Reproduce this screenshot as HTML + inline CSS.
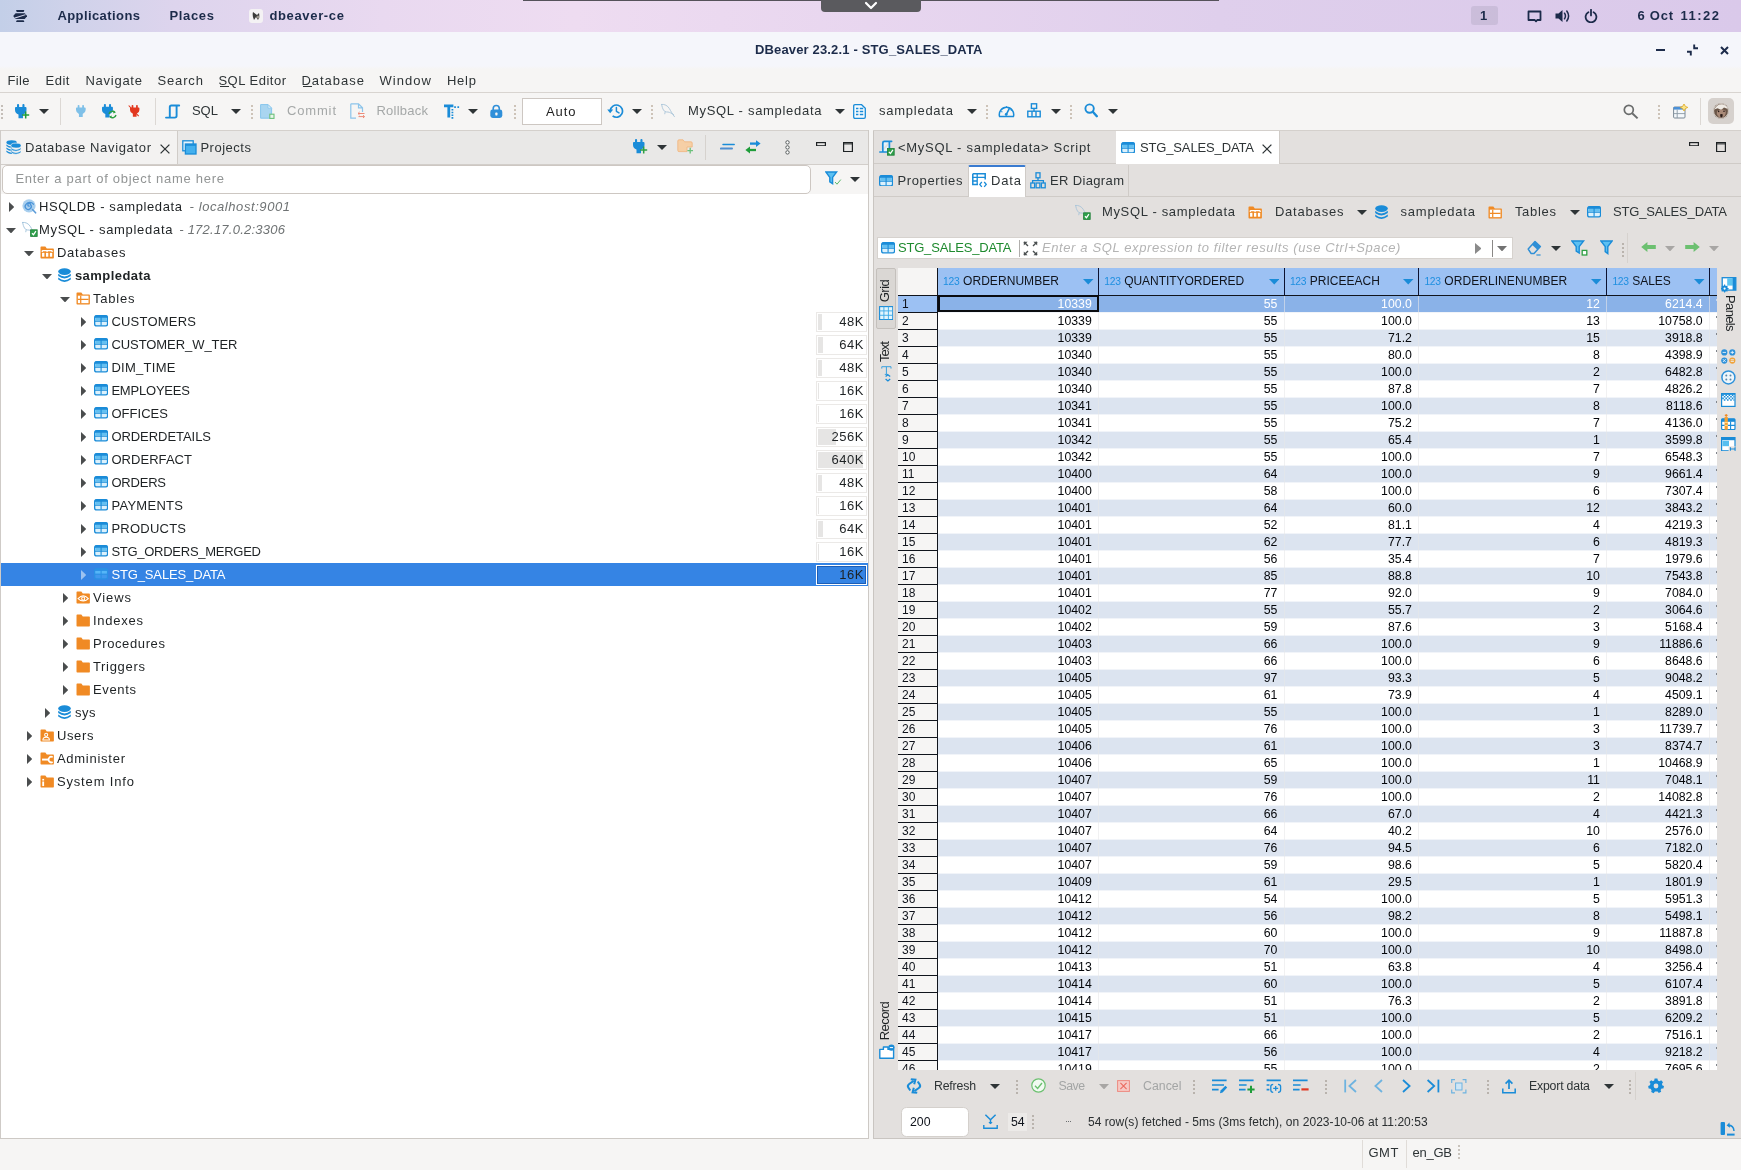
<!DOCTYPE html>
<html><head><meta charset="utf-8"><title>DBeaver</title>
<style>
html,body{margin:0;padding:0;}
body{width:1741px;height:1170px;overflow:hidden;background:#f6f5f4;font-family:"Liberation Sans",sans-serif;position:relative;}
.r{position:absolute;display:block;box-sizing:border-box;}
.t{position:absolute;white-space:pre;box-sizing:border-box;}
</style></head><body><div id="w" style="position:absolute;left:0;top:0;width:1741px;height:1170px;will-change:transform;">
<div class="r" style="left:0px;top:0px;width:1741px;height:32px;background:linear-gradient(90deg,#c3cfe8 0,#cfd2ea 4%,#ddd4ed 10%,#e9d9f0 22%,#eedcf1 33%,#e8d6ef 50%,#dfcfec 70%,#dac9ea 100%);"></div>
<div class="r" style="left:523px;top:0px;width:696px;height:1px;background:#55525a;"></div>
<div class="r" style="left:821px;top:0px;width:100px;height:12px;background:#5a5a5e;border-radius:0 0 4px 4px;"></div>
<svg class="r" style="left:864px;top:1px" width="14" height="9" viewBox="0 0 14 9" preserveAspectRatio="none"><path d="M2 2L7 7L12 2" fill="none" stroke="#fff" stroke-width="2.2" stroke-linecap="round" stroke-linejoin="round"/></svg>
<svg class="r" style="left:13px;top:10px" width="14.4" height="12.2" viewBox="0 0 14.4 12.2" preserveAspectRatio="none"><path d="M3.6 0H10.8Q11.6 0 11.2 0.8L10.6 2H3.8L3.2 0.8Q2.8 0 3.6 0Z" fill="#1c2b4a"/><path d="M3.6 12.2H10.8Q11.6 12.2 11.2 11.4L10.6 10.2H3.8L3.2 11.4Q2.8 12.2 3.6 12.2Z" fill="#1c2b4a"/><path d="M2.6 3.2H11.8L14.2 6.1L11.8 9H2.6L0.2 6.1Z" fill="#1c2b4a"/><path d="M1.6 7.6L12.2 4.2L12.9 5L2.4 8.5Z" fill="#d3d6ec"/></svg>
<div class="t" style="left:57.4px;top:6px;height:20px;line-height:20px;font-size:13px;color:#1c2b4a;font-weight:bold;letter-spacing:0.418px;">Applications</div>
<div class="t" style="left:169.4px;top:6px;height:20px;line-height:20px;font-size:13px;color:#1c2b4a;font-weight:bold;letter-spacing:0.676px;">Places</div>
<div class="r" style="left:249px;top:9px;width:14px;height:14px;background:#f4f2f4;border-radius:3px;"></div>
<svg class="r" style="left:250px;top:10px" width="12" height="12" viewBox="0 0 12 12" preserveAspectRatio="none"><path d="M3 2Q2 6 4 10L6 7L8 10Q10 7 9 3L7 5Z" fill="#3a3a3a"/><circle cx="8" cy="7" r="1.6" fill="#9a948c"/></svg>
<div class="t" style="left:269.4px;top:6px;height:20px;line-height:20px;font-size:13px;color:#1c2b4a;font-weight:bold;letter-spacing:0.659px;">dbeaver-ce</div>
<div class="r" style="left:1470.5px;top:5.5px;width:27px;height:19.5px;background:rgba(110,110,130,0.16);border-radius:3px;"></div>
<div class="t" style="left:1479.9px;top:6px;height:20px;line-height:20px;font-size:13px;color:#1c2b4a;font-weight:bold;">1</div>
<svg class="r" style="left:1527px;top:10px" width="15" height="13" viewBox="0 0 15 13" preserveAspectRatio="none"><path d="M1.5 1.5H13.5V10H10.2L9 11.4L7.8 10H1.5Z" fill="none" stroke="#1c2b4a" stroke-width="1.8" stroke-linejoin="round"/></svg>
<svg class="r" style="left:1555px;top:9px" width="16" height="14" viewBox="0 0 16 14" preserveAspectRatio="none"><path d="M0.5 4.5H3.5L7.5 1V13L3.5 9.5H0.5Z" fill="#1c2b4a"/><path d="M9.5 4.2Q11.4 7 9.5 9.8M11.8 2Q15.4 7 11.8 12" fill="none" stroke="#1c2b4a" stroke-width="1.5" stroke-linecap="round"/></svg>
<svg class="r" style="left:1584px;top:9px" width="14" height="14" viewBox="0 0 14 14" preserveAspectRatio="none"><path d="M4.4 3.2A5.4 5.4 0 1 0 9.6 3.2" fill="none" stroke="#1c2b4a" stroke-width="1.8" stroke-linecap="round"/><path d="M7 0.8V6.4" stroke="#1c2b4a" stroke-width="1.8" stroke-linecap="round"/></svg>
<div class="t" style="left:1637.4px;top:6px;height:20px;line-height:20px;font-size:13px;color:#1c2b4a;font-weight:bold;letter-spacing:0.771px;">6 Oct</div>
<div class="t" style="left:1680.4px;top:6px;height:20px;line-height:20px;font-size:13px;color:#1c2b4a;font-weight:bold;letter-spacing:1.513px;">11:22</div>
<div class="r" style="left:0px;top:32px;width:1741px;height:36.5px;background:linear-gradient(180deg,#f5f6fb 0,#f5f6fb 92%,#f6f5f4 100%);"></div>
<div class="t" style="left:754.9px;top:39.5px;height:20px;line-height:20px;font-size:13px;color:#1c2b4a;font-weight:bold;letter-spacing:0.160px;">DBeaver 23.2.1 - STG_SALES_DATA</div>
<div class="r" style="left:1656px;top:49px;width:9px;height:2px;background:#1c2b4a;"></div>
<svg class="r" style="left:1686px;top:44px" width="13" height="12" viewBox="0 0 13 12" preserveAspectRatio="none"><path d="M8.2 0.6V4.2H12M4.8 11.4V7.8H1" fill="none" stroke="#1c2b4a" stroke-width="1.9"/></svg>
<svg class="r" style="left:1720px;top:45.5px" width="9" height="9" viewBox="0 0 9 9" preserveAspectRatio="none"><path d="M1 1L8 8M8 1L1 8" stroke="#1c2b4a" stroke-width="2" /></svg>
<div class="r" style="left:0px;top:68.5px;width:1741px;height:24.5px;background:#f6f5f4;"></div>
<div class="t" style="left:7.4px;top:70.5px;height:20px;line-height:20px;font-size:13px;color:#2e3436;letter-spacing:0.382px;">File</div>
<div class="t" style="left:45.4px;top:70.5px;height:20px;line-height:20px;font-size:13px;color:#2e3436;letter-spacing:0.565px;">Edit</div>
<div class="t" style="left:85.4px;top:70.5px;height:20px;line-height:20px;font-size:13px;color:#2e3436;letter-spacing:0.753px;">Navigate</div>
<div class="t" style="left:157.4px;top:70.5px;height:20px;line-height:20px;font-size:13px;color:#2e3436;letter-spacing:0.879px;">Search</div>
<div class="t" style="left:218.4px;top:70.5px;height:20px;line-height:20px;font-size:13px;color:#2e3436;letter-spacing:0.499px;">SQL Editor</div>
<div class="t" style="left:301.4px;top:70.5px;height:20px;line-height:20px;font-size:13px;color:#2e3436;letter-spacing:0.990px;">Database</div>
<div class="t" style="left:379.4px;top:70.5px;height:20px;line-height:20px;font-size:13px;color:#2e3436;letter-spacing:1.070px;">Window</div>
<div class="t" style="left:446.9px;top:70.5px;height:20px;line-height:20px;font-size:13px;color:#2e3436;letter-spacing:0.783px;">Help</div>
<div class="r" style="left:219.5px;top:85.8px;width:9px;height:1px;background:#2e3436;"></div>
<div class="r" style="left:302.5px;top:85.8px;width:9.5px;height:1px;background:#2e3436;"></div>
<div class="r" style="left:0px;top:92px;width:1741px;height:1px;background:#d8d4d0;"></div>
<div class="r" style="left:0px;top:93.5px;width:1741px;height:37px;background:#f6f5f4;"></div>
<div class="r" style="left:1.3px;top:104.5px;width:2px;height:2px;background:#c4beb8;"></div>
<div class="r" style="left:1.3px;top:108.5px;width:2px;height:2px;background:#c4beb8;"></div>
<div class="r" style="left:1.3px;top:112.5px;width:2px;height:2px;background:#c4beb8;"></div>
<div class="r" style="left:1.3px;top:116.5px;width:2px;height:2px;background:#c4beb8;"></div>
<svg class="r" style="left:14.7px;top:103.7px;overflow:visible" width="16" height="16" viewBox="0 0 16 16"><rect x="2" y="0" width="2.1" height="4.4" rx="0.9" fill="#1a8cd8"/><rect x="7.4" y="0" width="2.1" height="4.4" rx="0.9" fill="#1a8cd8"/><path d="M0.9 3H10.6Q11.5 3 11.5 3.9V6Q11.5 9.2 8 10.6V14.2H3.5V10.6Q0 9.2 0 6V3.9Q0 3 0.9 3Z" fill="#1a8cd8"/><path d="M7.2 11H14.2M10.7 7.5V14.5" stroke="#1f9d3a" stroke-width="1.5"/></svg>
<svg class="r" style="left:39.1px;top:109px" width="10" height="5" viewBox="0 0 10 5" preserveAspectRatio="none"><path d="M0 0H10 L5 5Z" fill="#2e3436"/></svg>
<div class="r" style="left:60px;top:98px;width:1px;height:27px;background:#dcd8d4;"></div>
<svg class="r" style="left:76.4px;top:105px;overflow:visible" width="13.44" height="13.44" viewBox="0 0 16 16"><rect x="2" y="0" width="2.1" height="4.4" rx="0.9" fill="#7fc0e8"/><rect x="7.4" y="0" width="2.1" height="4.4" rx="0.9" fill="#7fc0e8"/><path d="M0.9 3H10.6Q11.5 3 11.5 3.9V6Q11.5 9.2 8 10.6V14.2H3.5V10.6Q0 9.2 0 6V3.9Q0 3 0.9 3Z" fill="#7fc0e8"/></svg>
<svg class="r" style="left:101.5px;top:104px;overflow:visible" width="15.2" height="15.2" viewBox="0 0 16 16"><rect x="2" y="0" width="2.1" height="4.4" rx="0.9" fill="#1a8cd8"/><rect x="7.4" y="0" width="2.1" height="4.4" rx="0.9" fill="#1a8cd8"/><path d="M0.9 3H10.6Q11.5 3 11.5 3.9V6Q11.5 9.2 8 10.6V14.2H3.5V10.6Q0 9.2 0 6V3.9Q0 3 0.9 3Z" fill="#1a8cd8"/></svg>
<svg class="r" style="left:107.6px;top:109.8px" width="9" height="9" viewBox="0 0 9 9" preserveAspectRatio="none"><path d="M1 4A3.5 3.5 0 0 1 7 2.4M8 5A3.5 3.5 0 0 1 2 6.6" fill="none" stroke="#2ea043" stroke-width="1.4"/><path d="M5.6 0.6L7.8 2.6L5.2 3.6ZM3.4 8.4L1.2 6.4L3.8 5.4Z" fill="#2ea043"/></svg>
<svg class="r" style="left:130.4px;top:105px;overflow:visible" width="13.12" height="13.12" viewBox="0 0 16 16"><rect x="2" y="0" width="2.1" height="4.4" rx="0.9" fill="#e2381f"/><rect x="7.4" y="0" width="2.1" height="4.4" rx="0.9" fill="#e2381f"/><path d="M0.9 3H10.6Q11.5 3 11.5 3.9V6Q11.5 9.2 8 10.6V14.2H3.5V10.6Q0 9.2 0 6V3.9Q0 3 0.9 3Z" fill="#e2381f"/><path d="M-1.6 0.6L10.6 13.6" stroke="#e2381f" stroke-width="1.3"/></svg>
<div class="r" style="left:155px;top:98px;width:1px;height:27px;background:#dcd8d4;"></div>
<svg class="r" style="left:164.5px;top:103.5px" width="16" height="16" viewBox="0 0 16 16" preserveAspectRatio="none"><path d="M14.2 1.5H6.4Q4.8 1.5 4.8 3.1V13.4M11.6 1.5V11.8Q11.6 13.6 9.8 13.6H1" fill="none" stroke="#1a8cd8" stroke-width="1.9" stroke-linecap="round" stroke-linejoin="round"/></svg>
<div class="t" style="left:191.9px;top:101px;height:20px;line-height:20px;font-size:13px;color:#2e3436;letter-spacing:0.042px;">SQL</div>
<svg class="r" style="left:231px;top:108.5px" width="10" height="5" viewBox="0 0 10 5" preserveAspectRatio="none"><path d="M0 0H10 L5 5Z" fill="#2e3436"/></svg>
<div class="r" style="left:250.5px;top:104.5px;width:2px;height:2px;background:#cdc3b8;"></div>
<div class="r" style="left:250.5px;top:108.5px;width:2px;height:2px;background:#cdc3b8;"></div>
<div class="r" style="left:250.5px;top:112.5px;width:2px;height:2px;background:#cdc3b8;"></div>
<div class="r" style="left:250.5px;top:116.5px;width:2px;height:2px;background:#cdc3b8;"></div>
<svg class="r" style="left:260px;top:104px" width="15" height="16" viewBox="0 0 15 16" preserveAspectRatio="none"><path d="M0.6 0.6H8L11.6 4.2V14.2H0.6Z" fill="#a9d5f0" stroke="#86c5ec" stroke-width="1"/><path d="M8 0.6V4.2H11.6Z" fill="#e3f1fa" stroke="#86c5ec" stroke-width="0.8"/><rect x="9.8" y="10.2" width="4.2" height="4.2" fill="#e8f6ea" stroke="#6cc07a" stroke-width="1.1"/></svg>
<div class="t" style="left:286.9px;top:101px;height:20px;line-height:20px;font-size:13px;color:#a5a8a8;letter-spacing:0.864px;">Commit</div>
<svg class="r" style="left:350px;top:103px" width="15" height="16" viewBox="0 0 15 16" preserveAspectRatio="none"><path d="M0.8 0.8H8.5L12.5 4.8V9M6 15.2H0.8V0.8M8.5 0.8V4.8H12.5" fill="none" stroke="#8cc4ea" stroke-width="1.2"/><path d="M8 10.5H14.5M8 10.5L9.6 9M8 10.5L9.6 12M14.5 13.6H8.5M14.5 13.6L13 12.2M14.5 13.6L13 15" stroke="#ec8a78" stroke-width="1" fill="none"/></svg>
<div class="t" style="left:376.4px;top:101px;height:20px;line-height:20px;font-size:13px;color:#a5a8a8;letter-spacing:0.246px;">Rollback</div>
<svg class="r" style="left:444px;top:103.5px" width="16" height="16" viewBox="0 0 16 16" preserveAspectRatio="none"><path d="M0 1.8H9.4M4.8 1.8V13.6" stroke="#1a8cd8" stroke-width="2.8"/><path d="M10.2 3.2H15.4" stroke="#1a8cd8" stroke-width="1.8" stroke-dasharray="1.7 1.5"/><path d="M8.4 5V15" stroke="#1a8cd8" stroke-width="1.8" stroke-dasharray="1.6 1.1"/></svg>
<svg class="r" style="left:468px;top:108.5px" width="10" height="5" viewBox="0 0 10 5" preserveAspectRatio="none"><path d="M0 0H10 L5 5Z" fill="#2e3436"/></svg>
<svg class="r" style="left:489.5px;top:104px" width="13" height="15" viewBox="0 0 13 15" preserveAspectRatio="none"><path d="M3.2 6.4V4.6A3.05 3.05 0 0 1 9.3 4.6V6.4" fill="none" stroke="#2f8fd9" stroke-width="1.6"/><rect x="0.3" y="5.6" width="12" height="8.4" rx="2.4" fill="#2f8fd9"/><rect x="5.3" y="8.6" width="2.2" height="2.8" rx="0.6" fill="#f6f5f4"/></svg>
<div class="r" style="left:514px;top:104.5px;width:2px;height:2px;background:#cdc3b8;"></div>
<div class="r" style="left:514px;top:108.5px;width:2px;height:2px;background:#cdc3b8;"></div>
<div class="r" style="left:514px;top:112.5px;width:2px;height:2px;background:#cdc3b8;"></div>
<div class="r" style="left:514px;top:116.5px;width:2px;height:2px;background:#cdc3b8;"></div>
<div class="r" style="left:522px;top:98px;width:80px;height:27px;background:#ffffff;border:1px solid #cdc7c2;"></div>
<div class="t" style="left:545.9px;top:101.5px;height:20px;line-height:20px;font-size:13px;color:#1e1e1e;letter-spacing:0.950px;">Auto</div>
<svg class="r" style="left:607px;top:103px" width="17" height="16" viewBox="0 0 17 16" preserveAspectRatio="none"><path d="M3.3 7.6A6.1 6.1 0 1 1 5.6 12.9" fill="none" stroke="#1a8cd8" stroke-width="1.7"/><path d="M9.4 4.4V8.3L12 9.9" fill="none" stroke="#1a8cd8" stroke-width="1.5" stroke-linecap="round" stroke-linejoin="round"/><path d="M0.2 6.4H6.2L3.2 10.2Z" fill="#1a8cd8"/></svg>
<svg class="r" style="left:632px;top:108.5px" width="10" height="5" viewBox="0 0 10 5" preserveAspectRatio="none"><path d="M0 0H10 L5 5Z" fill="#2e3436"/></svg>
<div class="r" style="left:651px;top:104.5px;width:2px;height:2px;background:#cdc3b8;"></div>
<div class="r" style="left:651px;top:108.5px;width:2px;height:2px;background:#cdc3b8;"></div>
<div class="r" style="left:651px;top:112.5px;width:2px;height:2px;background:#cdc3b8;"></div>
<div class="r" style="left:651px;top:116.5px;width:2px;height:2px;background:#cdc3b8;"></div>
<svg class="r" style="left:661px;top:103px" width="16" height="16" viewBox="0 0 16 16" preserveAspectRatio="none"><path d="M0.6 1.4C3.6 1 6.6 2.6 8.4 5.6C9.8 8 11 10.6 13.4 13.6M0.6 1.4C1 3.6 1.6 5.6 2.6 7.2C3.6 8.6 5.2 9.2 7 9C8.8 9.4 10.6 10.2 12.6 11.6M4.2 8.6L3.8 10.8" fill="none" stroke="#a9c4d8" stroke-width="0.9" stroke-linecap="round"/></svg>
<div class="t" style="left:687.9px;top:101px;height:20px;line-height:20px;font-size:13px;color:#2e3436;letter-spacing:0.703px;">MySQL - sampledata</div>
<svg class="r" style="left:835px;top:108.5px" width="10" height="5" viewBox="0 0 10 5" preserveAspectRatio="none"><path d="M0 0H10 L5 5Z" fill="#2e3436"/></svg>
<svg class="r" style="left:853px;top:104px" width="13" height="15" viewBox="0 0 13 15" preserveAspectRatio="none"><path d="M0.7 2Q0.7 0.7 2 0.7H8.6L12.3 4.2V13Q12.3 14.3 11 14.3H2Q0.7 14.3 0.7 13Z" fill="#f4fafe" stroke="#1a8cd8" stroke-width="1.3"/><path d="M3 4.6H5.4M3 7.6H5.4M3 10.6H5.4" stroke="#1a8cd8" stroke-width="1.5"/><path d="M6.8 4.6H10.2M6.8 7.6H10.2M6.8 10.6H10.2" stroke="#1a8cd8" stroke-width="1.5"/></svg>
<div class="t" style="left:878.9px;top:101px;height:20px;line-height:20px;font-size:13px;color:#2e3436;letter-spacing:0.763px;">sampledata</div>
<svg class="r" style="left:967px;top:108.5px" width="10" height="5" viewBox="0 0 10 5" preserveAspectRatio="none"><path d="M0 0H10 L5 5Z" fill="#2e3436"/></svg>
<div class="r" style="left:986px;top:104.5px;width:2px;height:2px;background:#cdc3b8;"></div>
<div class="r" style="left:986px;top:108.5px;width:2px;height:2px;background:#cdc3b8;"></div>
<div class="r" style="left:986px;top:112.5px;width:2px;height:2px;background:#cdc3b8;"></div>
<div class="r" style="left:986px;top:116.5px;width:2px;height:2px;background:#cdc3b8;"></div>
<svg class="r" style="left:998px;top:103px" width="17" height="15" viewBox="0 0 17 15" preserveAspectRatio="none"><path d="M1.6 13.6A7.2 7.2 0 1 1 15.4 13.6Z" fill="none" stroke="#1a8cd8" stroke-width="1.5" stroke-linejoin="round"/><path d="M8.2 11.6L11.4 5.4" stroke="#1a8cd8" stroke-width="1.6" stroke-linecap="round"/><path d="M3.2 8.6L4.4 9M5.2 4.8L6 5.8M8.5 3.2V4.4M12.8 7.6L13.8 7.2" stroke="#1a8cd8" stroke-width="1.1"/><circle cx="8.2" cy="11.4" r="1.4" fill="#1a8cd8"/></svg>
<svg class="r" style="left:1027px;top:103px" width="14" height="15" viewBox="0 0 14 15" preserveAspectRatio="none"><rect x="4.4" y="0.8" width="5.2" height="4.6" fill="none" stroke="#1a8cd8" stroke-width="1.4"/><path d="M7 5.4V8" stroke="#1a8cd8" stroke-width="1.4"/><rect x="0.8" y="8.2" width="12.4" height="5.6" fill="none" stroke="#1a8cd8" stroke-width="1.4"/><path d="M5 8.2V13.8M9 8.2V13.8" stroke="#1a8cd8" stroke-width="1.4"/></svg>
<svg class="r" style="left:1051px;top:108.5px" width="10" height="5" viewBox="0 0 10 5" preserveAspectRatio="none"><path d="M0 0H10 L5 5Z" fill="#2e3436"/></svg>
<div class="r" style="left:1070px;top:104.5px;width:2px;height:2px;background:#cdc3b8;"></div>
<div class="r" style="left:1070px;top:108.5px;width:2px;height:2px;background:#cdc3b8;"></div>
<div class="r" style="left:1070px;top:112.5px;width:2px;height:2px;background:#cdc3b8;"></div>
<div class="r" style="left:1070px;top:116.5px;width:2px;height:2px;background:#cdc3b8;"></div>
<svg class="r" style="left:1084px;top:103px" width="14" height="15" viewBox="0 0 14 15" preserveAspectRatio="none"><circle cx="5.6" cy="5.6" r="4.2" fill="none" stroke="#1a8cd8" stroke-width="1.9"/><path d="M8.8 8.8L12.8 13.2" stroke="#1a8cd8" stroke-width="2.4" stroke-linecap="round"/></svg>
<svg class="r" style="left:1108px;top:108.5px" width="10" height="5" viewBox="0 0 10 5" preserveAspectRatio="none"><path d="M0 0H10 L5 5Z" fill="#2e3436"/></svg>
<svg class="r" style="left:1622.5px;top:103.5px" width="16" height="16" viewBox="0 0 16 16" preserveAspectRatio="none"><circle cx="5.8" cy="5.8" r="4.5" fill="none" stroke="#6a6c6c" stroke-width="1.7"/><path d="M9.2 9.2L14.6 14.4" stroke="#6a6c6c" stroke-width="2"/></svg>
<div class="r" style="left:1658px;top:104.5px;width:2px;height:2px;background:#cdc3b8;"></div>
<div class="r" style="left:1658px;top:108.5px;width:2px;height:2px;background:#cdc3b8;"></div>
<div class="r" style="left:1658px;top:112.5px;width:2px;height:2px;background:#cdc3b8;"></div>
<div class="r" style="left:1658px;top:116.5px;width:2px;height:2px;background:#cdc3b8;"></div>
<svg class="r" style="left:1672.5px;top:103.5px" width="15" height="15" viewBox="0 0 15 15" preserveAspectRatio="none"><rect x="0.6" y="3" width="11.4" height="11" rx="1" fill="#f4f8fb" stroke="#7a8894" stroke-width="1"/><rect x="0.6" y="3" width="11.4" height="2.6" fill="#4a90d8"/><path d="M4.2 5.6V14M0.6 9.6H12" stroke="#8a98a4" stroke-width="0.9"/><path d="M11 0L12.4 2.4L14.8 3.4L12.4 4.6L11 7L9.6 4.6L7.2 3.4L9.6 2.4Z" fill="#fbe58a" stroke="#e0a820" stroke-width="0.8"/></svg>
<div class="r" style="left:1700px;top:98px;width:1px;height:27px;background:#dcd8d4;"></div>
<div class="r" style="left:1708px;top:98px;width:26px;height:25.6px;background:#d6d1cd;border-radius:5px;"></div>
<svg class="r" style="left:1713px;top:103.2px" width="16" height="16" viewBox="0 0 16 16" preserveAspectRatio="none"><circle cx="8" cy="8" r="7.7" fill="#6a5648"/><path d="M1.2 6.4Q4 1 9 1.2Q13.4 1.6 14.8 6L11 4.6L8.2 7L4.6 5.2Z" fill="#efeae4"/><path d="M4 8Q8 5.2 12.4 7.4Q13.6 11 11 13.6Q8 15.4 5.2 13.6Q3 11 4 8Z" fill="#a98a78"/><path d="M7 11.4Q8.4 10.4 9.8 11.4Q9.6 14.4 8.4 14.6Q7.2 14.4 7 11.4Z" fill="#2a1c18"/><circle cx="5.6" cy="8.4" r="0.8" fill="#2a1c18"/><circle cx="11" cy="8.2" r="0.8" fill="#2a1c18"/><circle cx="8" cy="8" r="7.4" fill="none" stroke="#e8e2dc" stroke-width="0.8"/></svg>
<div class="r" style="left:0px;top:130.3px;width:869px;height:33.5px;background:#e9e8e7;"></div>
<div class="r" style="left:0px;top:130.3px;width:869px;height:1px;background:#d4d0cc;"></div>
<div class="r" style="left:1px;top:131.3px;width:177px;height:32.5px;background:#f3f2f1;border-right:1px solid #d0ccc8;"></div>
<svg class="r" style="left:5.5px;top:140px" width="15.5" height="15" viewBox="0 0 15.5 15" preserveAspectRatio="none"><g fill="#1a8cd8"><ellipse cx="5.6" cy="2.6" rx="5.2" ry="2.4"/><path d="M0.4 4.4Q3 6.6 6 6.4V8Q3 8.2 0.4 6ZM0.4 7.4Q3 9.6 6 9.4V11Q3 11.2 0.4 9ZM0.4 10.4Q3 12.6 6 12.4V14Q3 14.2 0.4 12Z"/></g><g fill="#1a8cd8" stroke="#f3f2f1" stroke-width="0.7"><ellipse cx="10" cy="5.6" rx="5.2" ry="2.5"/><path d="M4.8 7.6Q10 11.4 15.2 7.6V9.4Q10 13.2 4.8 9.4Z"/><path d="M4.8 10.6Q10 14.4 15.2 10.6V12.4Q10 16.2 4.8 12.4Z"/></g></svg>
<div class="t" style="left:24.9px;top:137.5px;height:20px;line-height:20px;font-size:13px;color:#2e3436;letter-spacing:0.657px;">Database Navigator</div>
<svg class="r" style="left:160px;top:143.5px" width="10" height="10" viewBox="0 0 10 10" preserveAspectRatio="none"><path d="M0.6 0.6L9.4 9.4M9.4 0.6L0.6 9.4" stroke="#2e3436" stroke-width="1.3" fill="none"/></svg>
<svg class="r" style="left:182px;top:140px" width="15" height="15" viewBox="0 0 15 15" preserveAspectRatio="none"><rect x="0.8" y="0.8" width="10.4" height="10" fill="#e6f4fc" stroke="#1a8cd8" stroke-width="1.3"/><rect x="3.4" y="4" width="10.6" height="10" fill="#43b0ee" stroke="#1a8cd8" stroke-width="1.3"/><path d="M3.4 5H14" stroke="#1a8cd8" stroke-width="1.6"/></svg>
<div class="t" style="left:200.4px;top:137.5px;height:20px;line-height:20px;font-size:13px;color:#2e3436;letter-spacing:0.519px;">Projects</div>
<svg class="r" style="left:632.5px;top:139px;overflow:visible" width="16" height="16" viewBox="0 0 16 16"><rect x="2" y="0" width="2.1" height="4.4" rx="0.9" fill="#1a8cd8"/><rect x="7.4" y="0" width="2.1" height="4.4" rx="0.9" fill="#1a8cd8"/><path d="M0.9 3H10.6Q11.5 3 11.5 3.9V6Q11.5 9.2 8 10.6V14.2H3.5V10.6Q0 9.2 0 6V3.9Q0 3 0.9 3Z" fill="#1a8cd8"/><path d="M7.2 11H14.2M10.7 7.5V14.5" stroke="#2ea043" stroke-width="1.5"/></svg>
<svg class="r" style="left:657px;top:145px" width="10" height="5" viewBox="0 0 10 5" preserveAspectRatio="none"><path d="M0 0H10 L5 5Z" fill="#2e3436"/></svg>
<svg class="r" style="left:677px;top:139px" width="17" height="15" viewBox="0 0 17 15" preserveAspectRatio="none"><path d="M0.8 2Q0.8 0.8 2 0.8H6L7.6 2.8H14Q15.2 2.8 15.2 4V8H10V12.6H2Q0.8 12.6 0.8 11.4Z" fill="#f6cfa6" stroke="#f0b47c" stroke-width="0.8"/><path d="M10.4 11.6H16M13.2 8.8V14.4" stroke="#6cc07a" stroke-width="1.3"/></svg>
<div class="r" style="left:705px;top:135px;width:1px;height:25px;background:#d6d2ce;"></div>
<svg class="r" style="left:719.5px;top:143px" width="15" height="8" viewBox="0 0 15 8" preserveAspectRatio="none"><path d="M3 1.4H14.2" stroke="#1a8cd8" stroke-width="1.5" stroke-linecap="round"/><path d="M0.8 5.6H12" stroke="#4f8ed0" stroke-width="2" stroke-linecap="round"/></svg>
<svg class="r" style="left:745px;top:140px" width="16" height="14" viewBox="0 0 16 14" preserveAspectRatio="none"><path d="M5 3.6H12.4" stroke="#1a8cd8" stroke-width="2.3"/><path d="M11 0.2L15.6 3.6L11 7Z" fill="#1a8cd8"/><path d="M11 10H3.6" stroke="#1f9d3a" stroke-width="2.3"/><path d="M5 6.6L0.4 10L5 13.4Z" fill="#1f9d3a"/></svg>
<svg class="r" style="left:784px;top:140px" width="7" height="15" viewBox="0 0 7 15" preserveAspectRatio="none"><circle cx="3.5" cy="2.4" r="1.7" fill="#fff" stroke="#4a4f50" stroke-width="0.9"/><circle cx="3.5" cy="7.4" r="1.7" fill="#fff" stroke="#4a4f50" stroke-width="0.9"/><circle cx="3.5" cy="12.4" r="1.7" fill="#fff" stroke="#4a4f50" stroke-width="0.9"/></svg>
<svg class="r" style="left:816px;top:141.8px" width="10" height="4.4" viewBox="0 0 10 4.4" preserveAspectRatio="none"><rect x="0.6" y="0.6" width="8.8" height="3.2" fill="none" stroke="#1e2224" stroke-width="1.2"/></svg>
<svg class="r" style="left:843px;top:141.8px" width="10" height="10.2" viewBox="0 0 10 10.2" preserveAspectRatio="none"><rect x="0.6" y="0.6" width="8.8" height="9" fill="none" stroke="#1e2224" stroke-width="1.2"/><path d="M0.6 1.9H9.4" stroke="#1e2224" stroke-width="1"/></svg>
<div class="r" style="left:0px;top:163.5px;width:869px;height:1px;background:#d2ceca;"></div>
<div class="r" style="left:0px;top:165px;width:869px;height:29px;background:#f6f5f4;"></div>
<div class="r" style="left:1.5px;top:165px;width:809px;height:28.5px;background:#ffffff;border:1px solid #cdc7c2;border-radius:5px;"></div>
<div class="t" style="left:15.4px;top:169px;height:20px;line-height:20px;font-size:13px;color:#929595;letter-spacing:0.713px;">Enter a part of object name here</div>
<svg class="r" style="left:825px;top:171px" width="17" height="15" viewBox="0 0 17 15" preserveAspectRatio="none"><path d="M0.8 1H11.6L7.6 6.4V12.6L4.8 10.8V6.4Z" fill="#5cc0f2" stroke="#1a8cd8" stroke-width="1.4"/><path d="M10 11L12 13.2L15.8 8.6" fill="none" stroke="#58b868" stroke-width="1"/></svg>
<svg class="r" style="left:850.2px;top:177px" width="10" height="5" viewBox="0 0 10 5" preserveAspectRatio="none"><path d="M0 0H10 L5 5Z" fill="#2e3436"/></svg>
<div class="r" style="left:0px;top:194px;width:869px;height:944px;background:#ffffff;"></div>
<div class="r" style="left:0px;top:130.3px;width:1px;height:1008px;background:#cfcbc7;"></div>
<div class="r" style="left:868px;top:130.3px;width:1px;height:1008px;background:#cdc9c5;"></div>
<div class="r" style="left:0px;top:1138px;width:869px;height:1px;background:#cdc9c5;"></div>
<svg class="r" style="left:9.1px;top:202px" width="5.4" height="10" viewBox="0 0 5.4 10" preserveAspectRatio="none"><path d="M0 0V10 L5.4 5Z" fill="#4a4d4e"/></svg>
<svg class="r" style="left:22px;top:198.5px" width="15" height="15" viewBox="0 0 15 15" preserveAspectRatio="none"><circle cx="7" cy="6.8" r="6.6" fill="#a9cfee"/><path d="M10.5 10.5L13.6 13.8" stroke="#5b9bd8" stroke-width="1.6" stroke-linecap="round"/><path d="M7.2 7.2A1.4 1.4 0 1 1 8.6 5.6A3 3 0 1 1 4.2 5.2A4.6 4.6 0 0 1 11.4 5.2" fill="none" stroke="#4a93d8" stroke-width="1.3" stroke-linecap="round"/></svg>
<div class="t" style="left:38.9px;top:197px;height:20px;line-height:20px;font-size:13px;color:#1e2224;letter-spacing:0.603px;">HSQLDB - sampledata</div>
<div class="t" style="left:185.4px;top:197px;height:20px;line-height:20px;font-size:13px;color:#6f7374;font-style:italic;letter-spacing:0.574px;"> - localhost:9001</div>
<svg class="r" style="left:6px;top:227.8px" width="10" height="5.4" viewBox="0 0 10 5.4" preserveAspectRatio="none"><path d="M0 0H10 L5 5.4Z" fill="#4a4d4e"/></svg>
<svg class="r" style="left:21.5px;top:221.4px" width="16" height="16" viewBox="0 0 16 16" preserveAspectRatio="none"><path d="M0.6 1.4C3.6 1 6.6 2.6 8.4 5.6C9.8 8 11 10.6 13.4 13.6M0.6 1.4C1 3.6 1.6 5.6 2.6 7.2C3.6 8.6 5.2 9.2 7 9C8.8 9.4 10.6 10.2 12.6 11.6M4.2 8.6L3.8 10.8" fill="none" stroke="#9fc2da" stroke-width="0.9" stroke-linecap="round"/><rect x="8.6" y="8.8" width="6.6" height="6.6" fill="#2e9f4a" stroke="#1f7f38" stroke-width="0.8"/><path d="M10 12.2L11.5 13.8L13.9 10.2" fill="none" stroke="#fff" stroke-width="1.3"/></svg>
<div class="t" style="left:38.9px;top:220px;height:20px;line-height:20px;font-size:13px;color:#1e2224;letter-spacing:0.703px;">MySQL - sampledata</div>
<div class="t" style="left:175.4px;top:220px;height:20px;line-height:20px;font-size:13px;color:#6f7374;font-style:italic;letter-spacing:0.237px;"> - 172.17.0.2:3306</div>
<svg class="r" style="left:24px;top:250.8px" width="10" height="5.4" viewBox="0 0 10 5.4" preserveAspectRatio="none"><path d="M0 0H10 L5 5.4Z" fill="#4a4d4e"/></svg>
<svg class="r" style="left:40px;top:245.6px" width="14.4" height="13" viewBox="0 0 14 12" preserveAspectRatio="none"><path d="M0.5 1.2Q0.5 0.5 1.2 0.5H5.2L6.6 2.2H12.8Q13.5 2.2 13.5 2.9V10.8Q13.5 11.5 12.8 11.5H1.2Q0.5 11.5 0.5 10.8Z" fill="#f08a24"/><path d="M2.2 4.2H11.8M2.2 4.2V5.6M6.9 4.2V5.6M11.8 4.2V5.6" stroke="#fff" stroke-width="1.2" fill="none"/><rect x="2" y="6.3" width="2.3" height="3.6" fill="#fff"/><rect x="5.8" y="6.3" width="2.3" height="3.6" fill="#fff"/><rect x="9.6" y="6.3" width="2.3" height="3.6" fill="#fff"/></svg>
<div class="t" style="left:56.9px;top:243px;height:20px;line-height:20px;font-size:13px;color:#1e2224;letter-spacing:0.804px;">Databases</div>
<svg class="r" style="left:42px;top:273.8px" width="10" height="5.4" viewBox="0 0 10 5.4" preserveAspectRatio="none"><path d="M0 0H10 L5 5.4Z" fill="#4a4d4e"/></svg>
<svg class="r" style="left:58.4px;top:267.8px" width="13" height="14.8" viewBox="0 0 13 13.7" preserveAspectRatio="none"><ellipse cx="6.5" cy="3.3" rx="6.3" ry="3.1" fill="#1a8cd8"/><path d="M0.2 5.4Q6.5 10.2 12.8 5.4V7.4Q6.5 12 0.2 7.4Z" fill="#1a8cd8"/><path d="M0.2 8.9Q6.5 13.6 12.8 8.9V10.6Q6.5 15.2 0.2 10.6Z" fill="#1a8cd8"/></svg>
<div class="t" style="left:74.9px;top:266px;height:20px;line-height:20px;font-size:13px;color:#1e2224;font-weight:bold;letter-spacing:0.450px;">sampledata</div>
<svg class="r" style="left:60px;top:296.8px" width="10" height="5.4" viewBox="0 0 10 5.4" preserveAspectRatio="none"><path d="M0 0H10 L5 5.4Z" fill="#4a4d4e"/></svg>
<svg class="r" style="left:76px;top:291.6px" width="14.4" height="13" viewBox="0 0 14 12" preserveAspectRatio="none"><path d="M0.5 1.2Q0.5 0.5 1.2 0.5H5.2L6.6 2.2H12.8Q13.5 2.2 13.5 2.9V10.8Q13.5 11.5 12.8 11.5H1.2Q0.5 11.5 0.5 10.8Z" fill="#f08a24"/><rect x="1.8" y="3.4" width="10.4" height="6.9" fill="#fff"/><path d="M1.8 6.85H12.2M4.6 3.4V10.3" stroke="#f08a24" stroke-width="1.2"/></svg>
<div class="t" style="left:92.9px;top:289px;height:20px;line-height:20px;font-size:13px;color:#1e2224;letter-spacing:0.801px;">Tables</div>
<svg class="r" style="left:81.1px;top:317px" width="5.4" height="10" viewBox="0 0 5.4 10" preserveAspectRatio="none"><path d="M0 0V10 L5.4 5Z" fill="#4a4d4e"/></svg>
<svg class="r" style="left:94px;top:315px" width="14.2" height="11.6" viewBox="0 0 14.2 11.6" preserveAspectRatio="none"><rect x="0.65" y="0.65" width="12.9" height="10.3" rx="2" fill="#dcf1fc" stroke="#1a8cd8" stroke-width="1.3"/><path d="M1.3 2.6H12.9V5.7H1.3Z" fill="#62c0f2"/><path d="M1 1.7H13.2" stroke="#1a8cd8" stroke-width="2.3"/><path d="M1 6.2H13.2M7.1 2V10.6" stroke="#1a8cd8" stroke-width="1.1" fill="none"/></svg>
<div class="t" style="left:111.4px;top:312px;height:20px;line-height:20px;font-size:13px;color:#1e2224;letter-spacing:0.221px;">CUSTOMERS</div>
<div class="r" style="left:816.2px;top:311.5px;width:50.5px;height:20px;background:#ffffff;border:1px solid #ebe9e7;"></div>
<div class="r" style="left:818.2px;top:313.5px;width:4px;height:16px;background:#e6e5e4;"></div>
<div class="t" style="left:816.2px;top:311.7px;width:47.8px;height:20px;line-height:20px;font-size:13px;letter-spacing:0.55px;text-align:right;color:#1e2224;">48K</div>
<svg class="r" style="left:81.1px;top:340px" width="5.4" height="10" viewBox="0 0 5.4 10" preserveAspectRatio="none"><path d="M0 0V10 L5.4 5Z" fill="#4a4d4e"/></svg>
<svg class="r" style="left:94px;top:338px" width="14.2" height="11.6" viewBox="0 0 14.2 11.6" preserveAspectRatio="none"><rect x="0.65" y="0.65" width="12.9" height="10.3" rx="2" fill="#dcf1fc" stroke="#1a8cd8" stroke-width="1.3"/><path d="M1.3 2.6H12.9V5.7H1.3Z" fill="#62c0f2"/><path d="M1 1.7H13.2" stroke="#1a8cd8" stroke-width="2.3"/><path d="M1 6.2H13.2M7.1 2V10.6" stroke="#1a8cd8" stroke-width="1.1" fill="none"/></svg>
<div class="t" style="left:111.4px;top:335px;height:20px;line-height:20px;font-size:13px;color:#1e2224;letter-spacing:-0.061px;">CUSTOMER_W_TER</div>
<div class="r" style="left:816.2px;top:334.5px;width:50.5px;height:20px;background:#ffffff;border:1px solid #ebe9e7;"></div>
<div class="r" style="left:818.2px;top:336.5px;width:5px;height:16px;background:#e6e5e4;"></div>
<div class="t" style="left:816.2px;top:334.7px;width:47.8px;height:20px;line-height:20px;font-size:13px;letter-spacing:0.55px;text-align:right;color:#1e2224;">64K</div>
<svg class="r" style="left:81.1px;top:363px" width="5.4" height="10" viewBox="0 0 5.4 10" preserveAspectRatio="none"><path d="M0 0V10 L5.4 5Z" fill="#4a4d4e"/></svg>
<svg class="r" style="left:94px;top:361px" width="14.2" height="11.6" viewBox="0 0 14.2 11.6" preserveAspectRatio="none"><rect x="0.65" y="0.65" width="12.9" height="10.3" rx="2" fill="#dcf1fc" stroke="#1a8cd8" stroke-width="1.3"/><path d="M1.3 2.6H12.9V5.7H1.3Z" fill="#62c0f2"/><path d="M1 1.7H13.2" stroke="#1a8cd8" stroke-width="2.3"/><path d="M1 6.2H13.2M7.1 2V10.6" stroke="#1a8cd8" stroke-width="1.1" fill="none"/></svg>
<div class="t" style="left:111.4px;top:358px;height:20px;line-height:20px;font-size:13px;color:#1e2224;letter-spacing:0.284px;">DIM_TIME</div>
<div class="r" style="left:816.2px;top:357.5px;width:50.5px;height:20px;background:#ffffff;border:1px solid #ebe9e7;"></div>
<div class="r" style="left:818.2px;top:359.5px;width:4px;height:16px;background:#e6e5e4;"></div>
<div class="t" style="left:816.2px;top:357.7px;width:47.8px;height:20px;line-height:20px;font-size:13px;letter-spacing:0.55px;text-align:right;color:#1e2224;">48K</div>
<svg class="r" style="left:81.1px;top:386px" width="5.4" height="10" viewBox="0 0 5.4 10" preserveAspectRatio="none"><path d="M0 0V10 L5.4 5Z" fill="#4a4d4e"/></svg>
<svg class="r" style="left:94px;top:384px" width="14.2" height="11.6" viewBox="0 0 14.2 11.6" preserveAspectRatio="none"><rect x="0.65" y="0.65" width="12.9" height="10.3" rx="2" fill="#dcf1fc" stroke="#1a8cd8" stroke-width="1.3"/><path d="M1.3 2.6H12.9V5.7H1.3Z" fill="#62c0f2"/><path d="M1 1.7H13.2" stroke="#1a8cd8" stroke-width="2.3"/><path d="M1 6.2H13.2M7.1 2V10.6" stroke="#1a8cd8" stroke-width="1.1" fill="none"/></svg>
<div class="t" style="left:111.4px;top:381px;height:20px;line-height:20px;font-size:13px;color:#1e2224;letter-spacing:-0.200px;">EMPLOYEES</div>
<div class="r" style="left:816.2px;top:380.5px;width:50.5px;height:20px;background:#ffffff;border:1px solid #ebe9e7;"></div>
<div class="r" style="left:818.2px;top:382.5px;width:1px;height:16px;background:#e6e5e4;"></div>
<div class="t" style="left:816.2px;top:380.7px;width:47.8px;height:20px;line-height:20px;font-size:13px;letter-spacing:0.55px;text-align:right;color:#1e2224;">16K</div>
<svg class="r" style="left:81.1px;top:409px" width="5.4" height="10" viewBox="0 0 5.4 10" preserveAspectRatio="none"><path d="M0 0V10 L5.4 5Z" fill="#4a4d4e"/></svg>
<svg class="r" style="left:94px;top:407px" width="14.2" height="11.6" viewBox="0 0 14.2 11.6" preserveAspectRatio="none"><rect x="0.65" y="0.65" width="12.9" height="10.3" rx="2" fill="#dcf1fc" stroke="#1a8cd8" stroke-width="1.3"/><path d="M1.3 2.6H12.9V5.7H1.3Z" fill="#62c0f2"/><path d="M1 1.7H13.2" stroke="#1a8cd8" stroke-width="2.3"/><path d="M1 6.2H13.2M7.1 2V10.6" stroke="#1a8cd8" stroke-width="1.1" fill="none"/></svg>
<div class="t" style="left:111.4px;top:404px;height:20px;line-height:20px;font-size:13px;color:#1e2224;letter-spacing:0.045px;">OFFICES</div>
<div class="r" style="left:816.2px;top:403.5px;width:50.5px;height:20px;background:#ffffff;border:1px solid #ebe9e7;"></div>
<div class="r" style="left:818.2px;top:405.5px;width:1px;height:16px;background:#e6e5e4;"></div>
<div class="t" style="left:816.2px;top:403.7px;width:47.8px;height:20px;line-height:20px;font-size:13px;letter-spacing:0.55px;text-align:right;color:#1e2224;">16K</div>
<svg class="r" style="left:81.1px;top:432px" width="5.4" height="10" viewBox="0 0 5.4 10" preserveAspectRatio="none"><path d="M0 0V10 L5.4 5Z" fill="#4a4d4e"/></svg>
<svg class="r" style="left:94px;top:430px" width="14.2" height="11.6" viewBox="0 0 14.2 11.6" preserveAspectRatio="none"><rect x="0.65" y="0.65" width="12.9" height="10.3" rx="2" fill="#dcf1fc" stroke="#1a8cd8" stroke-width="1.3"/><path d="M1.3 2.6H12.9V5.7H1.3Z" fill="#62c0f2"/><path d="M1 1.7H13.2" stroke="#1a8cd8" stroke-width="2.3"/><path d="M1 6.2H13.2M7.1 2V10.6" stroke="#1a8cd8" stroke-width="1.1" fill="none"/></svg>
<div class="t" style="left:111.4px;top:427px;height:20px;line-height:20px;font-size:13px;color:#1e2224;letter-spacing:-0.052px;">ORDERDETAILS</div>
<div class="r" style="left:816.2px;top:426.5px;width:50.5px;height:20px;background:#ffffff;border:1px solid #ebe9e7;"></div>
<div class="r" style="left:818.2px;top:428.5px;width:18px;height:16px;background:#e6e5e4;"></div>
<div class="t" style="left:816.2px;top:426.7px;width:47.8px;height:20px;line-height:20px;font-size:13px;letter-spacing:0.55px;text-align:right;color:#1e2224;">256K</div>
<svg class="r" style="left:81.1px;top:455px" width="5.4" height="10" viewBox="0 0 5.4 10" preserveAspectRatio="none"><path d="M0 0V10 L5.4 5Z" fill="#4a4d4e"/></svg>
<svg class="r" style="left:94px;top:453px" width="14.2" height="11.6" viewBox="0 0 14.2 11.6" preserveAspectRatio="none"><rect x="0.65" y="0.65" width="12.9" height="10.3" rx="2" fill="#dcf1fc" stroke="#1a8cd8" stroke-width="1.3"/><path d="M1.3 2.6H12.9V5.7H1.3Z" fill="#62c0f2"/><path d="M1 1.7H13.2" stroke="#1a8cd8" stroke-width="2.3"/><path d="M1 6.2H13.2M7.1 2V10.6" stroke="#1a8cd8" stroke-width="1.1" fill="none"/></svg>
<div class="t" style="left:111.4px;top:450px;height:20px;line-height:20px;font-size:13px;color:#1e2224;letter-spacing:0.054px;">ORDERFACT</div>
<div class="r" style="left:816.2px;top:449.5px;width:50.5px;height:20px;background:#ffffff;border:1px solid #ebe9e7;"></div>
<div class="r" style="left:818.2px;top:451.5px;width:45px;height:16px;background:#e6e5e4;"></div>
<div class="t" style="left:816.2px;top:449.7px;width:47.8px;height:20px;line-height:20px;font-size:13px;letter-spacing:0.55px;text-align:right;color:#1e2224;">640K</div>
<svg class="r" style="left:81.1px;top:478px" width="5.4" height="10" viewBox="0 0 5.4 10" preserveAspectRatio="none"><path d="M0 0V10 L5.4 5Z" fill="#4a4d4e"/></svg>
<svg class="r" style="left:94px;top:476px" width="14.2" height="11.6" viewBox="0 0 14.2 11.6" preserveAspectRatio="none"><rect x="0.65" y="0.65" width="12.9" height="10.3" rx="2" fill="#dcf1fc" stroke="#1a8cd8" stroke-width="1.3"/><path d="M1.3 2.6H12.9V5.7H1.3Z" fill="#62c0f2"/><path d="M1 1.7H13.2" stroke="#1a8cd8" stroke-width="2.3"/><path d="M1 6.2H13.2M7.1 2V10.6" stroke="#1a8cd8" stroke-width="1.1" fill="none"/></svg>
<div class="t" style="left:111.4px;top:473px;height:20px;line-height:20px;font-size:13px;color:#1e2224;letter-spacing:-0.205px;">ORDERS</div>
<div class="r" style="left:816.2px;top:472.5px;width:50.5px;height:20px;background:#ffffff;border:1px solid #ebe9e7;"></div>
<div class="r" style="left:818.2px;top:474.5px;width:4px;height:16px;background:#e6e5e4;"></div>
<div class="t" style="left:816.2px;top:472.7px;width:47.8px;height:20px;line-height:20px;font-size:13px;letter-spacing:0.55px;text-align:right;color:#1e2224;">48K</div>
<svg class="r" style="left:81.1px;top:501px" width="5.4" height="10" viewBox="0 0 5.4 10" preserveAspectRatio="none"><path d="M0 0V10 L5.4 5Z" fill="#4a4d4e"/></svg>
<svg class="r" style="left:94px;top:499px" width="14.2" height="11.6" viewBox="0 0 14.2 11.6" preserveAspectRatio="none"><rect x="0.65" y="0.65" width="12.9" height="10.3" rx="2" fill="#dcf1fc" stroke="#1a8cd8" stroke-width="1.3"/><path d="M1.3 2.6H12.9V5.7H1.3Z" fill="#62c0f2"/><path d="M1 1.7H13.2" stroke="#1a8cd8" stroke-width="2.3"/><path d="M1 6.2H13.2M7.1 2V10.6" stroke="#1a8cd8" stroke-width="1.1" fill="none"/></svg>
<div class="t" style="left:111.4px;top:496px;height:20px;line-height:20px;font-size:13px;color:#1e2224;letter-spacing:0.289px;">PAYMENTS</div>
<div class="r" style="left:816.2px;top:495.5px;width:50.5px;height:20px;background:#ffffff;border:1px solid #ebe9e7;"></div>
<div class="r" style="left:818.2px;top:497.5px;width:1px;height:16px;background:#e6e5e4;"></div>
<div class="t" style="left:816.2px;top:495.7px;width:47.8px;height:20px;line-height:20px;font-size:13px;letter-spacing:0.55px;text-align:right;color:#1e2224;">16K</div>
<svg class="r" style="left:81.1px;top:524px" width="5.4" height="10" viewBox="0 0 5.4 10" preserveAspectRatio="none"><path d="M0 0V10 L5.4 5Z" fill="#4a4d4e"/></svg>
<svg class="r" style="left:94px;top:522px" width="14.2" height="11.6" viewBox="0 0 14.2 11.6" preserveAspectRatio="none"><rect x="0.65" y="0.65" width="12.9" height="10.3" rx="2" fill="#dcf1fc" stroke="#1a8cd8" stroke-width="1.3"/><path d="M1.3 2.6H12.9V5.7H1.3Z" fill="#62c0f2"/><path d="M1 1.7H13.2" stroke="#1a8cd8" stroke-width="2.3"/><path d="M1 6.2H13.2M7.1 2V10.6" stroke="#1a8cd8" stroke-width="1.1" fill="none"/></svg>
<div class="t" style="left:111.4px;top:519px;height:20px;line-height:20px;font-size:13px;color:#1e2224;letter-spacing:0.235px;">PRODUCTS</div>
<div class="r" style="left:816.2px;top:518.5px;width:50.5px;height:20px;background:#ffffff;border:1px solid #ebe9e7;"></div>
<div class="r" style="left:818.2px;top:520.5px;width:5px;height:16px;background:#e6e5e4;"></div>
<div class="t" style="left:816.2px;top:518.7px;width:47.8px;height:20px;line-height:20px;font-size:13px;letter-spacing:0.55px;text-align:right;color:#1e2224;">64K</div>
<svg class="r" style="left:81.1px;top:547px" width="5.4" height="10" viewBox="0 0 5.4 10" preserveAspectRatio="none"><path d="M0 0V10 L5.4 5Z" fill="#4a4d4e"/></svg>
<svg class="r" style="left:94px;top:545px" width="14.2" height="11.6" viewBox="0 0 14.2 11.6" preserveAspectRatio="none"><rect x="0.65" y="0.65" width="12.9" height="10.3" rx="2" fill="#dcf1fc" stroke="#1a8cd8" stroke-width="1.3"/><path d="M1.3 2.6H12.9V5.7H1.3Z" fill="#62c0f2"/><path d="M1 1.7H13.2" stroke="#1a8cd8" stroke-width="2.3"/><path d="M1 6.2H13.2M7.1 2V10.6" stroke="#1a8cd8" stroke-width="1.1" fill="none"/></svg>
<div class="t" style="left:111.4px;top:542px;height:20px;line-height:20px;font-size:13px;color:#1e2224;letter-spacing:-0.267px;">STG_ORDERS_MERGED</div>
<div class="r" style="left:816.2px;top:541.5px;width:50.5px;height:20px;background:#ffffff;border:1px solid #ebe9e7;"></div>
<div class="r" style="left:818.2px;top:543.5px;width:1px;height:16px;background:#e6e5e4;"></div>
<div class="t" style="left:816.2px;top:541.7px;width:47.8px;height:20px;line-height:20px;font-size:13px;letter-spacing:0.55px;text-align:right;color:#1e2224;">16K</div>
<div class="r" style="left:1px;top:563px;width:867px;height:23px;background:#3584e4;"></div>
<svg class="r" style="left:81.1px;top:570px" width="5.4" height="10" viewBox="0 0 5.4 10" preserveAspectRatio="none"><path d="M0 0V10 L5.4 5Z" fill="#9cc2f0"/></svg>
<svg class="r" style="left:94px;top:568px" width="14.2" height="11.6" viewBox="0 0 14.2 11.6" preserveAspectRatio="none"><rect x="0.65" y="0.65" width="12.9" height="10.3" rx="2" fill="#4198ee" stroke="#2a90e4" stroke-width="1.3"/><path d="M1.3 2.6H12.9V5.7H1.3Z" fill="#55b6f7"/><path d="M1 1.7H13.2" stroke="#2a90e4" stroke-width="2.3"/><path d="M1 6.2H13.2M7.1 2V10.6" stroke="#2a90e4" stroke-width="1.1" fill="none"/></svg>
<div class="t" style="left:111.4px;top:565px;height:20px;line-height:20px;font-size:13px;color:#ffffff;letter-spacing:-0.134px;">STG_SALES_DATA</div>
<div class="r" style="left:816.2px;top:564.5px;width:50.5px;height:20px;background:#3584e4;border:1px solid #ffffff;box-shadow:inset 0 0 0 1px #1c5db5;"></div>
<div class="t" style="left:816.2px;top:564.7px;width:47.8px;height:20px;line-height:20px;font-size:13px;letter-spacing:0.55px;text-align:right;color:#1e2224;">16K</div>
<svg class="r" style="left:63.1px;top:593px" width="5.4" height="10" viewBox="0 0 5.4 10" preserveAspectRatio="none"><path d="M0 0V10 L5.4 5Z" fill="#4a4d4e"/></svg>
<svg class="r" style="left:76px;top:590.6px" width="14.4" height="13" viewBox="0 0 14 12" preserveAspectRatio="none"><path d="M0.5 1.2Q0.5 0.5 1.2 0.5H5.2L6.6 2.2H12.8Q13.5 2.2 13.5 2.9V10.8Q13.5 11.5 12.8 11.5H1.2Q0.5 11.5 0.5 10.8Z" fill="#f08a24"/><path d="M2 7Q7 2.2 12 7Q7 11.4 2 7Z" fill="none" stroke="#fff" stroke-width="1.1"/><circle cx="7" cy="7" r="1.5" fill="none" stroke="#fff" stroke-width="1"/></svg>
<div class="t" style="left:92.9px;top:588px;height:20px;line-height:20px;font-size:13px;color:#1e2224;letter-spacing:0.912px;">Views</div>
<svg class="r" style="left:63.1px;top:616px" width="5.4" height="10" viewBox="0 0 5.4 10" preserveAspectRatio="none"><path d="M0 0V10 L5.4 5Z" fill="#4a4d4e"/></svg>
<svg class="r" style="left:76px;top:613.6px" width="14.4" height="13" viewBox="0 0 14 12" preserveAspectRatio="none"><path d="M0.5 1.2Q0.5 0.5 1.2 0.5H5.2L6.6 2.2H12.8Q13.5 2.2 13.5 2.9V10.8Q13.5 11.5 12.8 11.5H1.2Q0.5 11.5 0.5 10.8Z" fill="#f08a24"/></svg>
<div class="t" style="left:92.9px;top:611px;height:20px;line-height:20px;font-size:13px;color:#1e2224;letter-spacing:0.759px;">Indexes</div>
<svg class="r" style="left:63.1px;top:639px" width="5.4" height="10" viewBox="0 0 5.4 10" preserveAspectRatio="none"><path d="M0 0V10 L5.4 5Z" fill="#4a4d4e"/></svg>
<svg class="r" style="left:76px;top:636.6px" width="14.4" height="13" viewBox="0 0 14 12" preserveAspectRatio="none"><path d="M0.5 1.2Q0.5 0.5 1.2 0.5H5.2L6.6 2.2H12.8Q13.5 2.2 13.5 2.9V10.8Q13.5 11.5 12.8 11.5H1.2Q0.5 11.5 0.5 10.8Z" fill="#f08a24"/></svg>
<div class="t" style="left:92.9px;top:634px;height:20px;line-height:20px;font-size:13px;color:#1e2224;letter-spacing:0.622px;">Procedures</div>
<svg class="r" style="left:63.1px;top:662px" width="5.4" height="10" viewBox="0 0 5.4 10" preserveAspectRatio="none"><path d="M0 0V10 L5.4 5Z" fill="#4a4d4e"/></svg>
<svg class="r" style="left:76px;top:659.6px" width="14.4" height="13" viewBox="0 0 14 12" preserveAspectRatio="none"><path d="M0.5 1.2Q0.5 0.5 1.2 0.5H5.2L6.6 2.2H12.8Q13.5 2.2 13.5 2.9V10.8Q13.5 11.5 12.8 11.5H1.2Q0.5 11.5 0.5 10.8Z" fill="#f08a24"/></svg>
<div class="t" style="left:92.9px;top:657px;height:20px;line-height:20px;font-size:13px;color:#1e2224;letter-spacing:0.700px;">Triggers</div>
<svg class="r" style="left:63.1px;top:685px" width="5.4" height="10" viewBox="0 0 5.4 10" preserveAspectRatio="none"><path d="M0 0V10 L5.4 5Z" fill="#4a4d4e"/></svg>
<svg class="r" style="left:76px;top:682.6px" width="14.4" height="13" viewBox="0 0 14 12" preserveAspectRatio="none"><path d="M0.5 1.2Q0.5 0.5 1.2 0.5H5.2L6.6 2.2H12.8Q13.5 2.2 13.5 2.9V10.8Q13.5 11.5 12.8 11.5H1.2Q0.5 11.5 0.5 10.8Z" fill="#f08a24"/></svg>
<div class="t" style="left:92.9px;top:680px;height:20px;line-height:20px;font-size:13px;color:#1e2224;letter-spacing:0.670px;">Events</div>
<svg class="r" style="left:45.1px;top:708px" width="5.4" height="10" viewBox="0 0 5.4 10" preserveAspectRatio="none"><path d="M0 0V10 L5.4 5Z" fill="#4a4d4e"/></svg>
<svg class="r" style="left:58.4px;top:704.8px" width="13" height="14.8" viewBox="0 0 13 13.7" preserveAspectRatio="none"><ellipse cx="6.5" cy="3.3" rx="6.3" ry="3.1" fill="#1a8cd8"/><path d="M0.2 5.4Q6.5 10.2 12.8 5.4V7.4Q6.5 12 0.2 7.4Z" fill="#1a8cd8"/><path d="M0.2 8.9Q6.5 13.6 12.8 8.9V10.6Q6.5 15.2 0.2 10.6Z" fill="#1a8cd8"/></svg>
<div class="t" style="left:74.9px;top:703px;height:20px;line-height:20px;font-size:13px;color:#1e2224;letter-spacing:0.550px;">sys</div>
<svg class="r" style="left:27.1px;top:731px" width="5.4" height="10" viewBox="0 0 5.4 10" preserveAspectRatio="none"><path d="M0 0V10 L5.4 5Z" fill="#4a4d4e"/></svg>
<svg class="r" style="left:40px;top:728.6px" width="14.4" height="13" viewBox="0 0 14 12" preserveAspectRatio="none"><path d="M0.5 1.2Q0.5 0.5 1.2 0.5H5.2L6.6 2.2H12.8Q13.5 2.2 13.5 2.9V10.8Q13.5 11.5 12.8 11.5H1.2Q0.5 11.5 0.5 10.8Z" fill="#f08a24"/><circle cx="6" cy="5.4" r="1.5" fill="none" stroke="#fff" stroke-width="1"/><path d="M2.8 10.2Q2.8 7.6 6 7.6Q9.2 7.6 9.2 10.2Z" fill="none" stroke="#fff" stroke-width="1"/></svg>
<div class="t" style="left:56.9px;top:726px;height:20px;line-height:20px;font-size:13px;color:#1e2224;letter-spacing:0.662px;">Users</div>
<svg class="r" style="left:27.1px;top:754px" width="5.4" height="10" viewBox="0 0 5.4 10" preserveAspectRatio="none"><path d="M0 0V10 L5.4 5Z" fill="#4a4d4e"/></svg>
<svg class="r" style="left:40px;top:751.6px" width="14.4" height="13" viewBox="0 0 14 12" preserveAspectRatio="none"><path d="M0.5 1.2Q0.5 0.5 1.2 0.5H5.2L6.6 2.2H12.8Q13.5 2.2 13.5 2.9V10.8Q13.5 11.5 12.8 11.5H1.2Q0.5 11.5 0.5 10.8Z" fill="#f08a24"/><path d="M2 7H9" stroke="#fff" stroke-width="1.8"/><path d="M12.3 4.8A2.6 2.6 0 1 0 12.3 9.2" fill="none" stroke="#fff" stroke-width="1.6"/></svg>
<div class="t" style="left:56.9px;top:749px;height:20px;line-height:20px;font-size:13px;color:#1e2224;letter-spacing:0.742px;">Administer</div>
<svg class="r" style="left:27.1px;top:777px" width="5.4" height="10" viewBox="0 0 5.4 10" preserveAspectRatio="none"><path d="M0 0V10 L5.4 5Z" fill="#4a4d4e"/></svg>
<svg class="r" style="left:40px;top:774.6px" width="14.4" height="13" viewBox="0 0 14 12" preserveAspectRatio="none"><path d="M0.5 1.2Q0.5 0.5 1.2 0.5H5.2L6.6 2.2H12.8Q13.5 2.2 13.5 2.9V10.8Q13.5 11.5 12.8 11.5H1.2Q0.5 11.5 0.5 10.8Z" fill="#f08a24"/><rect x="2.2" y="6" width="1.8" height="4.2" fill="#fff"/><rect x="2.2" y="3.6" width="1.8" height="1.5" fill="#fff"/></svg>
<div class="t" style="left:56.9px;top:772px;height:20px;line-height:20px;font-size:13px;color:#1e2224;letter-spacing:0.846px;">System Info</div>
<div class="r" style="left:873px;top:130.3px;width:868px;height:1008px;background:#e3e0de;"></div>
<div class="r" style="left:873px;top:130.3px;width:1px;height:1008px;background:#c9c5c1;"></div>
<div class="r" style="left:873px;top:130.3px;width:868px;height:1px;background:#d4d0cc;"></div>
<div class="r" style="left:873px;top:1138px;width:868px;height:1px;background:#c9c5c1;"></div>
<div class="r" style="left:874px;top:163px;width:867px;height:1px;background:#cfcbc7;"></div>
<div class="r" style="left:1116px;top:130.5px;width:163.5px;height:33.5px;background:#ffffff;border-right:1px solid #d0ccc8;"></div>
<svg class="r" style="left:879px;top:140px" width="16" height="16" viewBox="0 0 16 16" preserveAspectRatio="none"><path d="M12.6 1.3H5.4Q3.8 1.3 3.8 2.9V11.6M10.4 1.3V10.2Q10.4 12 8.6 12H0.8" fill="#e4f3fc" stroke="#1a8cd8" stroke-width="1.7" stroke-linecap="round" stroke-linejoin="round"/><rect x="8.4" y="8.4" width="6.8" height="6.8" fill="#2e9f4a" stroke="#1f7f38" stroke-width="0.8"/><path d="M9.9 11.9L11.4 13.5L13.9 9.9" fill="none" stroke="#fff" stroke-width="1.3"/></svg>
<div class="t" style="left:897.9px;top:137.5px;height:20px;line-height:20px;font-size:13px;color:#2e3436;letter-spacing:0.728px;">&lt;MySQL - sampledata&gt; Script</div>
<svg class="r" style="left:1121px;top:141.5px" width="14.2" height="11.6" viewBox="0 0 14.2 11.6" preserveAspectRatio="none"><rect x="0.65" y="0.65" width="12.9" height="10.3" rx="2" fill="#dcf1fc" stroke="#1a8cd8" stroke-width="1.3"/><path d="M1.3 2.6H12.9V5.7H1.3Z" fill="#62c0f2"/><path d="M1 1.7H13.2" stroke="#1a8cd8" stroke-width="2.3"/><path d="M1 6.2H13.2M7.1 2V10.6" stroke="#1a8cd8" stroke-width="1.1" fill="none"/></svg>
<div class="t" style="left:1139.9px;top:137.5px;height:20px;line-height:20px;font-size:13px;color:#2e3436;letter-spacing:-0.134px;">STG_SALES_DATA</div>
<svg class="r" style="left:1261.5px;top:143.5px" width="10" height="10" viewBox="0 0 10 10" preserveAspectRatio="none"><path d="M0.6 0.6L9.4 9.4M9.4 0.6L0.6 9.4" stroke="#2e3436" stroke-width="1.3" fill="none"/></svg>
<svg class="r" style="left:1689px;top:141.8px" width="10" height="4.4" viewBox="0 0 10 4.4" preserveAspectRatio="none"><rect x="0.6" y="0.6" width="8.8" height="3.2" fill="none" stroke="#1e2224" stroke-width="1.2"/></svg>
<svg class="r" style="left:1716px;top:141.8px" width="10" height="10.2" viewBox="0 0 10 10.2" preserveAspectRatio="none"><rect x="0.6" y="0.6" width="8.8" height="9" fill="none" stroke="#1e2224" stroke-width="1.2"/><path d="M0.6 1.9H9.4" stroke="#1e2224" stroke-width="1"/></svg>
<div class="r" style="left:874px;top:196px;width:867px;height:1px;background:#cfcbc7;"></div>
<div class="r" style="left:967.5px;top:165px;width:58.5px;height:32px;background:#ffffff;border-left:1px solid #cfcbc7;border-right:1px solid #cfcbc7;border-top:2.5px solid #3a7bd0;border-radius:2px 2px 0 0;"></div>
<div class="r" style="left:1128px;top:165px;width:1px;height:31px;background:#cfcbc7;"></div>
<svg class="r" style="left:878.5px;top:174.5px" width="14.2" height="11.6" viewBox="0 0 14.2 11.6" preserveAspectRatio="none"><rect x="0.65" y="0.65" width="12.9" height="10.3" rx="2" fill="#dcf1fc" stroke="#1a8cd8" stroke-width="1.3"/><path d="M1.3 2.6H12.9V5.7H1.3Z" fill="#62c0f2"/><path d="M1 1.7H13.2" stroke="#1a8cd8" stroke-width="2.3"/><path d="M1 6.2H13.2M7.1 2V10.6" stroke="#1a8cd8" stroke-width="1.1" fill="none"/></svg>
<div class="t" style="left:897.4px;top:170.5px;height:20px;line-height:20px;font-size:13px;color:#2e3436;letter-spacing:0.648px;">Properties</div>
<svg class="r" style="left:972px;top:173px" width="15" height="15" viewBox="0 0 15 15" preserveAspectRatio="none"><path d="M0.8 0.8H13.2V6.4M0.8 0.8V11.6H6" fill="none" stroke="#1a8cd8" stroke-width="1.5"/><path d="M0.8 4.4H13.2M5.2 0.8V11.6M0.8 8H5.2" stroke="#1a8cd8" stroke-width="1.3"/><path d="M9.8 9L7.8 11.4L9.8 13.8M12.2 9L14.2 11.4L12.2 13.8" fill="none" stroke="#1a8cd8" stroke-width="1.3"/></svg>
<div class="t" style="left:990.9px;top:170.5px;height:20px;line-height:20px;font-size:13px;color:#2e3436;letter-spacing:0.877px;">Data</div>
<svg class="r" style="left:1030px;top:172px" width="16" height="17" viewBox="0 0 16 17" preserveAspectRatio="none"><rect x="6" y="0.8" width="4" height="5" fill="none" stroke="#1a8cd8" stroke-width="1.3"/><path d="M8 5.8V8.6M2.6 11V8.6H13.4V11" fill="none" stroke="#1a8cd8" stroke-width="1.3"/><rect x="0.8" y="11" width="3.8" height="4.8" fill="none" stroke="#1a8cd8" stroke-width="1.3"/><rect x="6.1" y="11" width="3.8" height="4.8" fill="none" stroke="#1a8cd8" stroke-width="1.3"/><rect x="11.4" y="11" width="3.8" height="4.8" fill="none" stroke="#1a8cd8" stroke-width="1.3"/></svg>
<div class="t" style="left:1049.9px;top:170.5px;height:20px;line-height:20px;font-size:13px;color:#2e3436;letter-spacing:0.365px;">ER Diagram</div>
<svg class="r" style="left:1075px;top:203.5px" width="16" height="16" viewBox="0 0 16 16" preserveAspectRatio="none"><path d="M0.6 1.4C3.6 1 6.6 2.6 8.4 5.6C9.8 8 11 10.6 13.4 13.6M0.6 1.4C1 3.6 1.6 5.6 2.6 7.2C3.6 8.6 5.2 9.2 7 9C8.8 9.4 10.6 10.2 12.6 11.6M4.2 8.6L3.8 10.8" fill="none" stroke="#a9c4d8" stroke-width="0.9" stroke-linecap="round"/><rect x="8.6" y="8.8" width="6.6" height="6.6" fill="#2e9f4a" stroke="#1f7f38" stroke-width="0.8"/><path d="M10 12.2L11.5 13.8L13.9 10.2" fill="none" stroke="#fff" stroke-width="1.3"/></svg>
<div class="t" style="left:1101.9px;top:202px;height:20px;line-height:20px;font-size:13px;color:#2e3436;letter-spacing:0.674px;">MySQL - sampledata</div>
<svg class="r" style="left:1248px;top:206px" width="14.4" height="13" viewBox="0 0 14 12" preserveAspectRatio="none"><path d="M0.5 1.2Q0.5 0.5 1.2 0.5H5.2L6.6 2.2H12.8Q13.5 2.2 13.5 2.9V10.8Q13.5 11.5 12.8 11.5H1.2Q0.5 11.5 0.5 10.8Z" fill="#f08a24"/><path d="M2.2 4.2H11.8M2.2 4.2V5.6M6.9 4.2V5.6M11.8 4.2V5.6" stroke="#fff" stroke-width="1.2" fill="none"/><rect x="2" y="6.3" width="2.3" height="3.6" fill="#fff"/><rect x="5.8" y="6.3" width="2.3" height="3.6" fill="#fff"/><rect x="9.6" y="6.3" width="2.3" height="3.6" fill="#fff"/></svg>
<div class="t" style="left:1274.9px;top:202px;height:20px;line-height:20px;font-size:13px;color:#2e3436;letter-spacing:0.804px;">Databases</div>
<svg class="r" style="left:1356.5px;top:210px" width="10" height="5" viewBox="0 0 10 5" preserveAspectRatio="none"><path d="M0 0H10 L5 5Z" fill="#2e3436"/></svg>
<svg class="r" style="left:1374.5px;top:205px" width="13" height="14.8" viewBox="0 0 13 13.7" preserveAspectRatio="none"><ellipse cx="6.5" cy="3.3" rx="6.3" ry="3.1" fill="#1a8cd8"/><path d="M0.2 5.4Q6.5 10.2 12.8 5.4V7.4Q6.5 12 0.2 7.4Z" fill="#1a8cd8"/><path d="M0.2 8.9Q6.5 13.6 12.8 8.9V10.6Q6.5 15.2 0.2 10.6Z" fill="#1a8cd8"/></svg>
<div class="t" style="left:1400.4px;top:202px;height:20px;line-height:20px;font-size:13px;color:#2e3436;letter-spacing:0.818px;">sampledata</div>
<svg class="r" style="left:1487.5px;top:206px" width="14.4" height="13" viewBox="0 0 14 12" preserveAspectRatio="none"><path d="M0.5 1.2Q0.5 0.5 1.2 0.5H5.2L6.6 2.2H12.8Q13.5 2.2 13.5 2.9V10.8Q13.5 11.5 12.8 11.5H1.2Q0.5 11.5 0.5 10.8Z" fill="#f08a24"/><rect x="1.8" y="3.4" width="10.4" height="6.9" fill="#fff"/><path d="M1.8 6.85H12.2M4.6 3.4V10.3" stroke="#f08a24" stroke-width="1.2"/></svg>
<div class="t" style="left:1514.9px;top:202px;height:20px;line-height:20px;font-size:13px;color:#2e3436;letter-spacing:0.701px;">Tables</div>
<svg class="r" style="left:1569.5px;top:210px" width="10" height="5" viewBox="0 0 10 5" preserveAspectRatio="none"><path d="M0 0H10 L5 5Z" fill="#2e3436"/></svg>
<svg class="r" style="left:1586.5px;top:206px" width="14.2" height="11.6" viewBox="0 0 14.2 11.6" preserveAspectRatio="none"><rect x="0.65" y="0.65" width="12.9" height="10.3" rx="2" fill="#dcf1fc" stroke="#1a8cd8" stroke-width="1.3"/><path d="M1.3 2.6H12.9V5.7H1.3Z" fill="#62c0f2"/><path d="M1 1.7H13.2" stroke="#1a8cd8" stroke-width="2.3"/><path d="M1 6.2H13.2M7.1 2V10.6" stroke="#1a8cd8" stroke-width="1.1" fill="none"/></svg>
<div class="t" style="left:1612.9px;top:202px;height:20px;line-height:20px;font-size:13px;color:#2e3436;letter-spacing:-0.134px;">STG_SALES_DATA</div>
<div class="r" style="left:877px;top:237px;width:635.5px;height:22px;background:#ffffff;border:1px solid #d6d2ce;"></div>
<svg class="r" style="left:881px;top:242px" width="14.2" height="11.6" viewBox="0 0 14.2 11.6" preserveAspectRatio="none"><rect x="0.65" y="0.65" width="12.9" height="10.3" rx="2" fill="#dcf1fc" stroke="#1a8cd8" stroke-width="1.3"/><path d="M1.3 2.6H12.9V5.7H1.3Z" fill="#62c0f2"/><path d="M1 1.7H13.2" stroke="#1a8cd8" stroke-width="2.3"/><path d="M1 6.2H13.2M7.1 2V10.6" stroke="#1a8cd8" stroke-width="1.1" fill="none"/></svg>
<div class="t" style="left:897.9px;top:238px;height:20px;line-height:20px;font-size:13px;color:#1e8a2e;letter-spacing:-0.173px;">STG_SALES_DATA</div>
<div class="r" style="left:1018.5px;top:240px;width:1px;height:17px;background:#b0aeac;"></div>
<svg class="r" style="left:1023px;top:240.5px" width="15" height="15" viewBox="0 0 15 15" preserveAspectRatio="none"><path d="M1 1L5 5M14 1L10 5M14 14L10 10M1 14L5 10" stroke="#4a4f50" stroke-width="1.4"/><path d="M0.8 0.8H4.6L0.8 4.6ZM14.2 0.8V4.6L10.4 0.8ZM14.2 14.2H10.4L14.2 10.4ZM0.8 14.2V10.4L4.6 14.2Z" fill="#4a4f50"/></svg>
<div class="t" style="left:1041.9px;top:237.5px;height:20px;line-height:20px;font-size:13px;color:#b4b4b4;font-style:italic;letter-spacing:0.620px;">Enter a SQL expression to filter results (use Ctrl+Space)</div>
<svg class="r" style="left:1474.75px;top:242.5px" width="6.5" height="11" viewBox="0 0 6.5 11" preserveAspectRatio="none"><path d="M0 0V11 L6.5 5.5Z" fill="#8a8a8a"/></svg>
<div class="r" style="left:1492px;top:240px;width:1px;height:17px;background:#8a8886;"></div>
<svg class="r" style="left:1496.5px;top:245.6px" width="10" height="5.4" viewBox="0 0 10 5.4" preserveAspectRatio="none"><path d="M0 0H10 L5 5.4Z" fill="#727272"/></svg>
<svg class="r" style="left:1527px;top:239.5px" width="15" height="16" viewBox="0 0 15 16" preserveAspectRatio="none"><path d="M1.2 9L8 1.6L13.4 6.6L7 13.4H4Z" fill="none" stroke="#2f8fd6" stroke-width="1.5" stroke-linejoin="round"/><path d="M8 1.6L13.4 6.6L10.4 9.8L5 4.8Z" fill="#2f8fd6"/><path d="M9.4 15H13.6" stroke="#2f8fd6" stroke-width="1.2"/></svg>
<svg class="r" style="left:1551px;top:246px" width="10" height="5" viewBox="0 0 10 5" preserveAspectRatio="none"><path d="M0 0H10 L5 5Z" fill="#2e3436"/></svg>
<svg class="r" style="left:1571px;top:239.5px" width="17" height="17" viewBox="0 0 17 17" preserveAspectRatio="none"><path d="M0.8 1H12.6L8.2 6.6V13L5.2 11.2V6.6Z" fill="#5cc0f2" stroke="#1a8cd8" stroke-width="1.4"/><rect x="11.2" y="10.4" width="4.6" height="4.6" fill="#fff" stroke="#2ea043" stroke-width="1.3"/></svg>
<svg class="r" style="left:1600px;top:240px" width="13" height="15" viewBox="0 0 13 15" preserveAspectRatio="none"><path d="M0.8 1H12.2L7.8 6.6V13.6L5.2 11.6V6.6Z" fill="#5cc0f2" stroke="#1a8cd8" stroke-width="1.4"/></svg>
<div class="r" style="left:1622px;top:242.5px;width:2px;height:2px;background:#b9b3ad;"></div>
<div class="r" style="left:1622px;top:246.5px;width:2px;height:2px;background:#b9b3ad;"></div>
<div class="r" style="left:1622px;top:250.5px;width:2px;height:2px;background:#b9b3ad;"></div>
<div class="r" style="left:1622px;top:254.5px;width:2px;height:2px;background:#b9b3ad;"></div>
<div class="r" style="left:1627px;top:233px;width:1px;height:30px;background:#d6d2ce;"></div>
<svg class="r" style="left:1640.5px;top:242px" width="15" height="10" viewBox="0 0 15 10" preserveAspectRatio="none"><path d="M6.4 0L0.2 5L6.4 10V7H14.8V3H6.4Z" fill="#6cc070"/></svg>
<svg class="r" style="left:1664.5px;top:245.8px" width="10" height="5.4" viewBox="0 0 10 5.4" preserveAspectRatio="none"><path d="M0 0H10 L5 5.4Z" fill="#a8a6a4"/></svg>
<svg class="r" style="left:1685px;top:242px" width="15" height="10" viewBox="0 0 15 10" preserveAspectRatio="none"><path d="M8.6 0L14.8 5L8.6 10V7H0.2V3H8.6Z" fill="#6cc070"/></svg>
<svg class="r" style="left:1709px;top:245.8px" width="10" height="5.4" viewBox="0 0 10 5.4" preserveAspectRatio="none"><path d="M0 0H10 L5 5.4Z" fill="#a8a6a4"/></svg>
<div class="r" style="left:876px;top:268px;width:20px;height:61px;background:#dad7d4;border:1px solid #c4c0bc;border-radius:2px;"></div>
<div class="t" style="left:885px;top:291px;width:0;height:0;"><div style="position:absolute;left:-50px;top:-10px;width:100px;height:20px;line-height:20px;text-align:center;font-size:13px;letter-spacing:-0.521px;color:#1e2224;transform:rotate(-90deg);">Grid</div></div>
<svg class="r" style="left:878.8px;top:306px" width="14.4" height="14.2" viewBox="0 0 14.4 14.2" preserveAspectRatio="none"><rect x="0.6" y="0.6" width="13.2" height="13" fill="#e2f5fd" stroke="#1a8cd8" stroke-width="1.1"/><path d="M0.6 4.9H13.8M0.6 9.3H13.8M4.9 0.6V13.6M9.4 0.6V13.6" stroke="#3aa8e6" stroke-width="0.9"/></svg>
<div class="t" style="left:885px;top:351.5px;width:0;height:0;"><div style="position:absolute;left:-50px;top:-10px;width:100px;height:20px;line-height:20px;text-align:center;font-size:13px;letter-spacing:-0.948px;color:#1e2224;transform:rotate(-90deg);">Text</div></div>
<svg class="r" style="left:880.5px;top:366px" width="12" height="16" viewBox="0 0 12 16" preserveAspectRatio="none"><path d="M0.8 2.6V0.7H10V2.6M5.4 0.7V8.4M3.8 8.4H7" fill="none" stroke="#3aa0de" stroke-width="1"/><path d="M4.6 10.6L6.9 8.8L9.2 10.6M4.6 13L6.9 15L9.2 13" fill="none" stroke="#1a8cd8" stroke-width="1.3"/></svg>
<div class="t" style="left:885px;top:1020.5px;width:0;height:0;"><div style="position:absolute;left:-50px;top:-10px;width:100px;height:20px;line-height:20px;text-align:center;font-size:13px;letter-spacing:-0.584px;color:#1e2224;transform:rotate(-90deg);">Record</div></div>
<svg class="r" style="left:878.5px;top:1043.5px" width="16" height="15" viewBox="0 0 16 15" preserveAspectRatio="none"><path d="M0.8 5.4H4.4V3H9V5.4H14.6V14.2H0.8Z" fill="#fff" stroke="#1a8cd8" stroke-width="1.4" stroke-linejoin="round"/><circle cx="12.4" cy="3.6" r="3.2" fill="#1a8cd8"/><path d="M10.8 3.6H14" stroke="#fff" stroke-width="1"/></svg>
<div class="r" style="left:898px;top:268px;width:819px;height:802px;overflow:hidden;background:#ffffff;">
<div class="r" style="left:0px;top:0px;width:39.5px;height:27px;background:#f6f5f4;"></div>
<div class="r" style="left:39.5px;top:0px;width:779.5px;height:27px;background:#9cc1f3;"></div>
<div class="t" style="left:45.1px;top:6.5px;height:14px;line-height:14px;font-size:10.3px;color:#1f8fe0;letter-spacing:-0.302px;">123</div>
<div class="t" style="left:65px;top:6px;height:14px;line-height:14px;font-size:12px;color:#10141c;letter-spacing:0.064px;">ORDERNUMBER</div>
<svg class="r" style="left:185.2px;top:11.3px" width="10.5" height="5.5" viewBox="0 0 10.5 5.5"><path d="M0 0H10.5L5.25 5.5Z" fill="#1a8cd8"/></svg>
<div class="r" style="left:200px;top:0px;width:1.1px;height:27px;background:#0c1230;"></div>
<div class="t" style="left:206.3px;top:6.5px;height:14px;line-height:14px;font-size:10.3px;color:#1f8fe0;letter-spacing:-0.302px;">123</div>
<div class="t" style="left:226.2px;top:6px;height:14px;line-height:14px;font-size:12px;color:#10141c;letter-spacing:-0.048px;">QUANTITYORDERED</div>
<svg class="r" style="left:370.8px;top:11.3px" width="10.5" height="5.5" viewBox="0 0 10.5 5.5"><path d="M0 0H10.5L5.25 5.5Z" fill="#1a8cd8"/></svg>
<div class="r" style="left:385.6px;top:0px;width:1.1px;height:27px;background:#0c1230;"></div>
<div class="t" style="left:391.9px;top:6.5px;height:14px;line-height:14px;font-size:10.3px;color:#1f8fe0;letter-spacing:-0.302px;">123</div>
<div class="t" style="left:411.8px;top:6px;height:14px;line-height:14px;font-size:12px;color:#10141c;letter-spacing:-0.002px;">PRICEEACH</div>
<svg class="r" style="left:505.3px;top:11.3px" width="10.5" height="5.5" viewBox="0 0 10.5 5.5"><path d="M0 0H10.5L5.25 5.5Z" fill="#1a8cd8"/></svg>
<div class="r" style="left:520.1px;top:0px;width:1.1px;height:27px;background:#0c1230;"></div>
<div class="t" style="left:526.4px;top:6.5px;height:14px;line-height:14px;font-size:10.3px;color:#1f8fe0;letter-spacing:-0.302px;">123</div>
<div class="t" style="left:546.3px;top:6px;height:14px;line-height:14px;font-size:12px;color:#10141c;letter-spacing:0.069px;">ORDERLINENUMBER</div>
<svg class="r" style="left:693.3px;top:11.3px" width="10.5" height="5.5" viewBox="0 0 10.5 5.5"><path d="M0 0H10.5L5.25 5.5Z" fill="#1a8cd8"/></svg>
<div class="r" style="left:708.1px;top:0px;width:1.1px;height:27px;background:#0c1230;"></div>
<div class="t" style="left:714.4px;top:6.5px;height:14px;line-height:14px;font-size:10.3px;color:#1f8fe0;letter-spacing:-0.302px;">123</div>
<div class="t" style="left:734.3px;top:6px;height:14px;line-height:14px;font-size:12px;color:#10141c;letter-spacing:-0.043px;">SALES</div>
<svg class="r" style="left:796.1px;top:11.3px" width="10.5" height="5.5" viewBox="0 0 10.5 5.5"><path d="M0 0H10.5L5.25 5.5Z" fill="#1a8cd8"/></svg>
<div class="r" style="left:810.9px;top:0px;width:1.1px;height:27px;background:#0c1230;"></div>
<div class="r" style="left:39px;top:0px;width:1.2px;height:27px;background:#10141c;"></div>
<div class="r" style="left:39.5px;top:27px;width:779.5px;height:17px;background:#8ab2e8;"></div>
<div class="r" style="left:0px;top:27px;width:39.5px;height:17px;background:#9cc1f3;border-right:1.3px solid #10141c;"></div>
<div class="t" style="left:4px;top:29px;height:14px;line-height:14px;font-size:12px;color:#10141c;">1</div>
<div class="t" style="left:39.5px;top:29.2px;width:154.3px;height:14px;line-height:14px;font-size:12.3px;text-align:right;color:#ffffff;">10339</div>
<div class="t" style="left:200.7px;top:29.2px;width:178.7px;height:14px;line-height:14px;font-size:12.3px;text-align:right;color:#ffffff;">55</div>
<div class="t" style="left:386.3px;top:29.2px;width:127.6px;height:14px;line-height:14px;font-size:12.3px;text-align:right;color:#ffffff;">100.0</div>
<div class="t" style="left:520.8px;top:29.2px;width:181.1px;height:14px;line-height:14px;font-size:12.3px;text-align:right;color:#ffffff;">12</div>
<div class="t" style="left:708.8px;top:29.2px;width:95.9px;height:14px;line-height:14px;font-size:12.3px;text-align:right;color:#ffffff;">6214.4</div>
<div class="r" style="left:818px;top:30.5px;width:1px;height:2.6px;background:#c5d9f4;"></div>
<div class="r" style="left:39.5px;top:44px;width:779.5px;height:17px;background:#ffffff;"></div>
<div class="r" style="left:0px;top:44px;width:39.5px;height:17px;background:#f6f5f4;border-right:1.3px solid #10141c;"></div>
<div class="t" style="left:4px;top:46px;height:14px;line-height:14px;font-size:12px;color:#10141c;">2</div>
<div class="t" style="left:39.5px;top:46.2px;width:154.3px;height:14px;line-height:14px;font-size:12.3px;text-align:right;color:#04060a;">10339</div>
<div class="t" style="left:200.7px;top:46.2px;width:178.7px;height:14px;line-height:14px;font-size:12.3px;text-align:right;color:#04060a;">55</div>
<div class="t" style="left:386.3px;top:46.2px;width:127.6px;height:14px;line-height:14px;font-size:12.3px;text-align:right;color:#04060a;">100.0</div>
<div class="t" style="left:520.8px;top:46.2px;width:181.1px;height:14px;line-height:14px;font-size:12.3px;text-align:right;color:#04060a;">13</div>
<div class="t" style="left:708.8px;top:46.2px;width:95.9px;height:14px;line-height:14px;font-size:12.3px;text-align:right;color:#04060a;">10758.0</div>
<div class="r" style="left:818px;top:47.5px;width:1px;height:2.6px;background:#80858c;"></div>
<div class="r" style="left:39.5px;top:61px;width:779.5px;height:17px;background:#dce4f0;"></div>
<div class="r" style="left:0px;top:61px;width:39.5px;height:17px;background:#f6f5f4;border-right:1.3px solid #10141c;"></div>
<div class="t" style="left:4px;top:63px;height:14px;line-height:14px;font-size:12px;color:#10141c;">3</div>
<div class="t" style="left:39.5px;top:63.2px;width:154.3px;height:14px;line-height:14px;font-size:12.3px;text-align:right;color:#04060a;">10339</div>
<div class="t" style="left:200.7px;top:63.2px;width:178.7px;height:14px;line-height:14px;font-size:12.3px;text-align:right;color:#04060a;">55</div>
<div class="t" style="left:386.3px;top:63.2px;width:127.6px;height:14px;line-height:14px;font-size:12.3px;text-align:right;color:#04060a;">71.2</div>
<div class="t" style="left:520.8px;top:63.2px;width:181.1px;height:14px;line-height:14px;font-size:12.3px;text-align:right;color:#04060a;">15</div>
<div class="t" style="left:708.8px;top:63.2px;width:95.9px;height:14px;line-height:14px;font-size:12.3px;text-align:right;color:#04060a;">3918.8</div>
<div class="r" style="left:818px;top:64.5px;width:1px;height:2.6px;background:#80858c;"></div>
<div class="r" style="left:39.5px;top:78px;width:779.5px;height:17px;background:#ffffff;"></div>
<div class="r" style="left:0px;top:78px;width:39.5px;height:17px;background:#f6f5f4;border-right:1.3px solid #10141c;"></div>
<div class="t" style="left:4px;top:80px;height:14px;line-height:14px;font-size:12px;color:#10141c;">4</div>
<div class="t" style="left:39.5px;top:80.2px;width:154.3px;height:14px;line-height:14px;font-size:12.3px;text-align:right;color:#04060a;">10340</div>
<div class="t" style="left:200.7px;top:80.2px;width:178.7px;height:14px;line-height:14px;font-size:12.3px;text-align:right;color:#04060a;">55</div>
<div class="t" style="left:386.3px;top:80.2px;width:127.6px;height:14px;line-height:14px;font-size:12.3px;text-align:right;color:#04060a;">80.0</div>
<div class="t" style="left:520.8px;top:80.2px;width:181.1px;height:14px;line-height:14px;font-size:12.3px;text-align:right;color:#04060a;">8</div>
<div class="t" style="left:708.8px;top:80.2px;width:95.9px;height:14px;line-height:14px;font-size:12.3px;text-align:right;color:#04060a;">4398.9</div>
<div class="r" style="left:818px;top:81.5px;width:1px;height:2.6px;background:#80858c;"></div>
<div class="r" style="left:39.5px;top:95px;width:779.5px;height:17px;background:#dce4f0;"></div>
<div class="r" style="left:0px;top:95px;width:39.5px;height:17px;background:#f6f5f4;border-right:1.3px solid #10141c;"></div>
<div class="t" style="left:4px;top:97px;height:14px;line-height:14px;font-size:12px;color:#10141c;">5</div>
<div class="t" style="left:39.5px;top:97.2px;width:154.3px;height:14px;line-height:14px;font-size:12.3px;text-align:right;color:#04060a;">10340</div>
<div class="t" style="left:200.7px;top:97.2px;width:178.7px;height:14px;line-height:14px;font-size:12.3px;text-align:right;color:#04060a;">55</div>
<div class="t" style="left:386.3px;top:97.2px;width:127.6px;height:14px;line-height:14px;font-size:12.3px;text-align:right;color:#04060a;">100.0</div>
<div class="t" style="left:520.8px;top:97.2px;width:181.1px;height:14px;line-height:14px;font-size:12.3px;text-align:right;color:#04060a;">2</div>
<div class="t" style="left:708.8px;top:97.2px;width:95.9px;height:14px;line-height:14px;font-size:12.3px;text-align:right;color:#04060a;">6482.8</div>
<div class="r" style="left:818px;top:98.5px;width:1px;height:2.6px;background:#80858c;"></div>
<div class="r" style="left:39.5px;top:112px;width:779.5px;height:17px;background:#ffffff;"></div>
<div class="r" style="left:0px;top:112px;width:39.5px;height:17px;background:#f6f5f4;border-right:1.3px solid #10141c;"></div>
<div class="t" style="left:4px;top:114px;height:14px;line-height:14px;font-size:12px;color:#10141c;">6</div>
<div class="t" style="left:39.5px;top:114.2px;width:154.3px;height:14px;line-height:14px;font-size:12.3px;text-align:right;color:#04060a;">10340</div>
<div class="t" style="left:200.7px;top:114.2px;width:178.7px;height:14px;line-height:14px;font-size:12.3px;text-align:right;color:#04060a;">55</div>
<div class="t" style="left:386.3px;top:114.2px;width:127.6px;height:14px;line-height:14px;font-size:12.3px;text-align:right;color:#04060a;">87.8</div>
<div class="t" style="left:520.8px;top:114.2px;width:181.1px;height:14px;line-height:14px;font-size:12.3px;text-align:right;color:#04060a;">7</div>
<div class="t" style="left:708.8px;top:114.2px;width:95.9px;height:14px;line-height:14px;font-size:12.3px;text-align:right;color:#04060a;">4826.2</div>
<div class="r" style="left:818px;top:115.5px;width:1px;height:2.6px;background:#80858c;"></div>
<div class="r" style="left:39.5px;top:129px;width:779.5px;height:17px;background:#dce4f0;"></div>
<div class="r" style="left:0px;top:129px;width:39.5px;height:17px;background:#f6f5f4;border-right:1.3px solid #10141c;"></div>
<div class="t" style="left:4px;top:131px;height:14px;line-height:14px;font-size:12px;color:#10141c;">7</div>
<div class="t" style="left:39.5px;top:131.2px;width:154.3px;height:14px;line-height:14px;font-size:12.3px;text-align:right;color:#04060a;">10341</div>
<div class="t" style="left:200.7px;top:131.2px;width:178.7px;height:14px;line-height:14px;font-size:12.3px;text-align:right;color:#04060a;">55</div>
<div class="t" style="left:386.3px;top:131.2px;width:127.6px;height:14px;line-height:14px;font-size:12.3px;text-align:right;color:#04060a;">100.0</div>
<div class="t" style="left:520.8px;top:131.2px;width:181.1px;height:14px;line-height:14px;font-size:12.3px;text-align:right;color:#04060a;">8</div>
<div class="t" style="left:708.8px;top:131.2px;width:95.9px;height:14px;line-height:14px;font-size:12.3px;text-align:right;color:#04060a;">8118.6</div>
<div class="r" style="left:818px;top:132.5px;width:1px;height:2.6px;background:#80858c;"></div>
<div class="r" style="left:39.5px;top:146px;width:779.5px;height:17px;background:#ffffff;"></div>
<div class="r" style="left:0px;top:146px;width:39.5px;height:17px;background:#f6f5f4;border-right:1.3px solid #10141c;"></div>
<div class="t" style="left:4px;top:148px;height:14px;line-height:14px;font-size:12px;color:#10141c;">8</div>
<div class="t" style="left:39.5px;top:148.2px;width:154.3px;height:14px;line-height:14px;font-size:12.3px;text-align:right;color:#04060a;">10341</div>
<div class="t" style="left:200.7px;top:148.2px;width:178.7px;height:14px;line-height:14px;font-size:12.3px;text-align:right;color:#04060a;">55</div>
<div class="t" style="left:386.3px;top:148.2px;width:127.6px;height:14px;line-height:14px;font-size:12.3px;text-align:right;color:#04060a;">75.2</div>
<div class="t" style="left:520.8px;top:148.2px;width:181.1px;height:14px;line-height:14px;font-size:12.3px;text-align:right;color:#04060a;">7</div>
<div class="t" style="left:708.8px;top:148.2px;width:95.9px;height:14px;line-height:14px;font-size:12.3px;text-align:right;color:#04060a;">4136.0</div>
<div class="r" style="left:818px;top:149.5px;width:1px;height:2.6px;background:#80858c;"></div>
<div class="r" style="left:39.5px;top:163px;width:779.5px;height:17px;background:#dce4f0;"></div>
<div class="r" style="left:0px;top:163px;width:39.5px;height:17px;background:#f6f5f4;border-right:1.3px solid #10141c;"></div>
<div class="t" style="left:4px;top:165px;height:14px;line-height:14px;font-size:12px;color:#10141c;">9</div>
<div class="t" style="left:39.5px;top:165.2px;width:154.3px;height:14px;line-height:14px;font-size:12.3px;text-align:right;color:#04060a;">10342</div>
<div class="t" style="left:200.7px;top:165.2px;width:178.7px;height:14px;line-height:14px;font-size:12.3px;text-align:right;color:#04060a;">55</div>
<div class="t" style="left:386.3px;top:165.2px;width:127.6px;height:14px;line-height:14px;font-size:12.3px;text-align:right;color:#04060a;">65.4</div>
<div class="t" style="left:520.8px;top:165.2px;width:181.1px;height:14px;line-height:14px;font-size:12.3px;text-align:right;color:#04060a;">1</div>
<div class="t" style="left:708.8px;top:165.2px;width:95.9px;height:14px;line-height:14px;font-size:12.3px;text-align:right;color:#04060a;">3599.8</div>
<div class="r" style="left:818px;top:166.5px;width:1px;height:2.6px;background:#80858c;"></div>
<div class="r" style="left:39.5px;top:180px;width:779.5px;height:17px;background:#ffffff;"></div>
<div class="r" style="left:0px;top:180px;width:39.5px;height:17px;background:#f6f5f4;border-right:1.3px solid #10141c;"></div>
<div class="t" style="left:4px;top:182px;height:14px;line-height:14px;font-size:12px;color:#10141c;">10</div>
<div class="t" style="left:39.5px;top:182.2px;width:154.3px;height:14px;line-height:14px;font-size:12.3px;text-align:right;color:#04060a;">10342</div>
<div class="t" style="left:200.7px;top:182.2px;width:178.7px;height:14px;line-height:14px;font-size:12.3px;text-align:right;color:#04060a;">55</div>
<div class="t" style="left:386.3px;top:182.2px;width:127.6px;height:14px;line-height:14px;font-size:12.3px;text-align:right;color:#04060a;">100.0</div>
<div class="t" style="left:520.8px;top:182.2px;width:181.1px;height:14px;line-height:14px;font-size:12.3px;text-align:right;color:#04060a;">7</div>
<div class="t" style="left:708.8px;top:182.2px;width:95.9px;height:14px;line-height:14px;font-size:12.3px;text-align:right;color:#04060a;">6548.3</div>
<div class="r" style="left:818px;top:183.5px;width:1px;height:2.6px;background:#80858c;"></div>
<div class="r" style="left:39.5px;top:197px;width:779.5px;height:17px;background:#dce4f0;"></div>
<div class="r" style="left:0px;top:197px;width:39.5px;height:17px;background:#f6f5f4;border-right:1.3px solid #10141c;"></div>
<div class="t" style="left:4px;top:199px;height:14px;line-height:14px;font-size:12px;color:#10141c;">11</div>
<div class="t" style="left:39.5px;top:199.2px;width:154.3px;height:14px;line-height:14px;font-size:12.3px;text-align:right;color:#04060a;">10400</div>
<div class="t" style="left:200.7px;top:199.2px;width:178.7px;height:14px;line-height:14px;font-size:12.3px;text-align:right;color:#04060a;">64</div>
<div class="t" style="left:386.3px;top:199.2px;width:127.6px;height:14px;line-height:14px;font-size:12.3px;text-align:right;color:#04060a;">100.0</div>
<div class="t" style="left:520.8px;top:199.2px;width:181.1px;height:14px;line-height:14px;font-size:12.3px;text-align:right;color:#04060a;">9</div>
<div class="t" style="left:708.8px;top:199.2px;width:95.9px;height:14px;line-height:14px;font-size:12.3px;text-align:right;color:#04060a;">9661.4</div>
<div class="r" style="left:818px;top:200.5px;width:1px;height:2.6px;background:#80858c;"></div>
<div class="r" style="left:39.5px;top:214px;width:779.5px;height:17px;background:#ffffff;"></div>
<div class="r" style="left:0px;top:214px;width:39.5px;height:17px;background:#f6f5f4;border-right:1.3px solid #10141c;"></div>
<div class="t" style="left:4px;top:216px;height:14px;line-height:14px;font-size:12px;color:#10141c;">12</div>
<div class="t" style="left:39.5px;top:216.2px;width:154.3px;height:14px;line-height:14px;font-size:12.3px;text-align:right;color:#04060a;">10400</div>
<div class="t" style="left:200.7px;top:216.2px;width:178.7px;height:14px;line-height:14px;font-size:12.3px;text-align:right;color:#04060a;">58</div>
<div class="t" style="left:386.3px;top:216.2px;width:127.6px;height:14px;line-height:14px;font-size:12.3px;text-align:right;color:#04060a;">100.0</div>
<div class="t" style="left:520.8px;top:216.2px;width:181.1px;height:14px;line-height:14px;font-size:12.3px;text-align:right;color:#04060a;">6</div>
<div class="t" style="left:708.8px;top:216.2px;width:95.9px;height:14px;line-height:14px;font-size:12.3px;text-align:right;color:#04060a;">7307.4</div>
<div class="r" style="left:818px;top:217.5px;width:1px;height:2.6px;background:#80858c;"></div>
<div class="r" style="left:39.5px;top:231px;width:779.5px;height:17px;background:#dce4f0;"></div>
<div class="r" style="left:0px;top:231px;width:39.5px;height:17px;background:#f6f5f4;border-right:1.3px solid #10141c;"></div>
<div class="t" style="left:4px;top:233px;height:14px;line-height:14px;font-size:12px;color:#10141c;">13</div>
<div class="t" style="left:39.5px;top:233.2px;width:154.3px;height:14px;line-height:14px;font-size:12.3px;text-align:right;color:#04060a;">10401</div>
<div class="t" style="left:200.7px;top:233.2px;width:178.7px;height:14px;line-height:14px;font-size:12.3px;text-align:right;color:#04060a;">64</div>
<div class="t" style="left:386.3px;top:233.2px;width:127.6px;height:14px;line-height:14px;font-size:12.3px;text-align:right;color:#04060a;">60.0</div>
<div class="t" style="left:520.8px;top:233.2px;width:181.1px;height:14px;line-height:14px;font-size:12.3px;text-align:right;color:#04060a;">12</div>
<div class="t" style="left:708.8px;top:233.2px;width:95.9px;height:14px;line-height:14px;font-size:12.3px;text-align:right;color:#04060a;">3843.2</div>
<div class="r" style="left:818px;top:234.5px;width:1px;height:2.6px;background:#80858c;"></div>
<div class="r" style="left:39.5px;top:248px;width:779.5px;height:17px;background:#ffffff;"></div>
<div class="r" style="left:0px;top:248px;width:39.5px;height:17px;background:#f6f5f4;border-right:1.3px solid #10141c;"></div>
<div class="t" style="left:4px;top:250px;height:14px;line-height:14px;font-size:12px;color:#10141c;">14</div>
<div class="t" style="left:39.5px;top:250.2px;width:154.3px;height:14px;line-height:14px;font-size:12.3px;text-align:right;color:#04060a;">10401</div>
<div class="t" style="left:200.7px;top:250.2px;width:178.7px;height:14px;line-height:14px;font-size:12.3px;text-align:right;color:#04060a;">52</div>
<div class="t" style="left:386.3px;top:250.2px;width:127.6px;height:14px;line-height:14px;font-size:12.3px;text-align:right;color:#04060a;">81.1</div>
<div class="t" style="left:520.8px;top:250.2px;width:181.1px;height:14px;line-height:14px;font-size:12.3px;text-align:right;color:#04060a;">4</div>
<div class="t" style="left:708.8px;top:250.2px;width:95.9px;height:14px;line-height:14px;font-size:12.3px;text-align:right;color:#04060a;">4219.3</div>
<div class="r" style="left:818px;top:251.5px;width:1px;height:2.6px;background:#80858c;"></div>
<div class="r" style="left:39.5px;top:265px;width:779.5px;height:17px;background:#dce4f0;"></div>
<div class="r" style="left:0px;top:265px;width:39.5px;height:17px;background:#f6f5f4;border-right:1.3px solid #10141c;"></div>
<div class="t" style="left:4px;top:267px;height:14px;line-height:14px;font-size:12px;color:#10141c;">15</div>
<div class="t" style="left:39.5px;top:267.2px;width:154.3px;height:14px;line-height:14px;font-size:12.3px;text-align:right;color:#04060a;">10401</div>
<div class="t" style="left:200.7px;top:267.2px;width:178.7px;height:14px;line-height:14px;font-size:12.3px;text-align:right;color:#04060a;">62</div>
<div class="t" style="left:386.3px;top:267.2px;width:127.6px;height:14px;line-height:14px;font-size:12.3px;text-align:right;color:#04060a;">77.7</div>
<div class="t" style="left:520.8px;top:267.2px;width:181.1px;height:14px;line-height:14px;font-size:12.3px;text-align:right;color:#04060a;">6</div>
<div class="t" style="left:708.8px;top:267.2px;width:95.9px;height:14px;line-height:14px;font-size:12.3px;text-align:right;color:#04060a;">4819.3</div>
<div class="r" style="left:818px;top:268.5px;width:1px;height:2.6px;background:#80858c;"></div>
<div class="r" style="left:39.5px;top:282px;width:779.5px;height:17px;background:#ffffff;"></div>
<div class="r" style="left:0px;top:282px;width:39.5px;height:17px;background:#f6f5f4;border-right:1.3px solid #10141c;"></div>
<div class="t" style="left:4px;top:284px;height:14px;line-height:14px;font-size:12px;color:#10141c;">16</div>
<div class="t" style="left:39.5px;top:284.2px;width:154.3px;height:14px;line-height:14px;font-size:12.3px;text-align:right;color:#04060a;">10401</div>
<div class="t" style="left:200.7px;top:284.2px;width:178.7px;height:14px;line-height:14px;font-size:12.3px;text-align:right;color:#04060a;">56</div>
<div class="t" style="left:386.3px;top:284.2px;width:127.6px;height:14px;line-height:14px;font-size:12.3px;text-align:right;color:#04060a;">35.4</div>
<div class="t" style="left:520.8px;top:284.2px;width:181.1px;height:14px;line-height:14px;font-size:12.3px;text-align:right;color:#04060a;">7</div>
<div class="t" style="left:708.8px;top:284.2px;width:95.9px;height:14px;line-height:14px;font-size:12.3px;text-align:right;color:#04060a;">1979.6</div>
<div class="r" style="left:818px;top:285.5px;width:1px;height:2.6px;background:#80858c;"></div>
<div class="r" style="left:39.5px;top:299px;width:779.5px;height:17px;background:#dce4f0;"></div>
<div class="r" style="left:0px;top:299px;width:39.5px;height:17px;background:#f6f5f4;border-right:1.3px solid #10141c;"></div>
<div class="t" style="left:4px;top:301px;height:14px;line-height:14px;font-size:12px;color:#10141c;">17</div>
<div class="t" style="left:39.5px;top:301.2px;width:154.3px;height:14px;line-height:14px;font-size:12.3px;text-align:right;color:#04060a;">10401</div>
<div class="t" style="left:200.7px;top:301.2px;width:178.7px;height:14px;line-height:14px;font-size:12.3px;text-align:right;color:#04060a;">85</div>
<div class="t" style="left:386.3px;top:301.2px;width:127.6px;height:14px;line-height:14px;font-size:12.3px;text-align:right;color:#04060a;">88.8</div>
<div class="t" style="left:520.8px;top:301.2px;width:181.1px;height:14px;line-height:14px;font-size:12.3px;text-align:right;color:#04060a;">10</div>
<div class="t" style="left:708.8px;top:301.2px;width:95.9px;height:14px;line-height:14px;font-size:12.3px;text-align:right;color:#04060a;">7543.8</div>
<div class="r" style="left:818px;top:302.5px;width:1px;height:2.6px;background:#80858c;"></div>
<div class="r" style="left:39.5px;top:316px;width:779.5px;height:17px;background:#ffffff;"></div>
<div class="r" style="left:0px;top:316px;width:39.5px;height:17px;background:#f6f5f4;border-right:1.3px solid #10141c;"></div>
<div class="t" style="left:4px;top:318px;height:14px;line-height:14px;font-size:12px;color:#10141c;">18</div>
<div class="t" style="left:39.5px;top:318.2px;width:154.3px;height:14px;line-height:14px;font-size:12.3px;text-align:right;color:#04060a;">10401</div>
<div class="t" style="left:200.7px;top:318.2px;width:178.7px;height:14px;line-height:14px;font-size:12.3px;text-align:right;color:#04060a;">77</div>
<div class="t" style="left:386.3px;top:318.2px;width:127.6px;height:14px;line-height:14px;font-size:12.3px;text-align:right;color:#04060a;">92.0</div>
<div class="t" style="left:520.8px;top:318.2px;width:181.1px;height:14px;line-height:14px;font-size:12.3px;text-align:right;color:#04060a;">9</div>
<div class="t" style="left:708.8px;top:318.2px;width:95.9px;height:14px;line-height:14px;font-size:12.3px;text-align:right;color:#04060a;">7084.0</div>
<div class="r" style="left:818px;top:319.5px;width:1px;height:2.6px;background:#80858c;"></div>
<div class="r" style="left:39.5px;top:333px;width:779.5px;height:17px;background:#dce4f0;"></div>
<div class="r" style="left:0px;top:333px;width:39.5px;height:17px;background:#f6f5f4;border-right:1.3px solid #10141c;"></div>
<div class="t" style="left:4px;top:335px;height:14px;line-height:14px;font-size:12px;color:#10141c;">19</div>
<div class="t" style="left:39.5px;top:335.2px;width:154.3px;height:14px;line-height:14px;font-size:12.3px;text-align:right;color:#04060a;">10402</div>
<div class="t" style="left:200.7px;top:335.2px;width:178.7px;height:14px;line-height:14px;font-size:12.3px;text-align:right;color:#04060a;">55</div>
<div class="t" style="left:386.3px;top:335.2px;width:127.6px;height:14px;line-height:14px;font-size:12.3px;text-align:right;color:#04060a;">55.7</div>
<div class="t" style="left:520.8px;top:335.2px;width:181.1px;height:14px;line-height:14px;font-size:12.3px;text-align:right;color:#04060a;">2</div>
<div class="t" style="left:708.8px;top:335.2px;width:95.9px;height:14px;line-height:14px;font-size:12.3px;text-align:right;color:#04060a;">3064.6</div>
<div class="r" style="left:818px;top:336.5px;width:1px;height:2.6px;background:#80858c;"></div>
<div class="r" style="left:39.5px;top:350px;width:779.5px;height:17px;background:#ffffff;"></div>
<div class="r" style="left:0px;top:350px;width:39.5px;height:17px;background:#f6f5f4;border-right:1.3px solid #10141c;"></div>
<div class="t" style="left:4px;top:352px;height:14px;line-height:14px;font-size:12px;color:#10141c;">20</div>
<div class="t" style="left:39.5px;top:352.2px;width:154.3px;height:14px;line-height:14px;font-size:12.3px;text-align:right;color:#04060a;">10402</div>
<div class="t" style="left:200.7px;top:352.2px;width:178.7px;height:14px;line-height:14px;font-size:12.3px;text-align:right;color:#04060a;">59</div>
<div class="t" style="left:386.3px;top:352.2px;width:127.6px;height:14px;line-height:14px;font-size:12.3px;text-align:right;color:#04060a;">87.6</div>
<div class="t" style="left:520.8px;top:352.2px;width:181.1px;height:14px;line-height:14px;font-size:12.3px;text-align:right;color:#04060a;">3</div>
<div class="t" style="left:708.8px;top:352.2px;width:95.9px;height:14px;line-height:14px;font-size:12.3px;text-align:right;color:#04060a;">5168.4</div>
<div class="r" style="left:818px;top:353.5px;width:1px;height:2.6px;background:#80858c;"></div>
<div class="r" style="left:39.5px;top:367px;width:779.5px;height:17px;background:#dce4f0;"></div>
<div class="r" style="left:0px;top:367px;width:39.5px;height:17px;background:#f6f5f4;border-right:1.3px solid #10141c;"></div>
<div class="t" style="left:4px;top:369px;height:14px;line-height:14px;font-size:12px;color:#10141c;">21</div>
<div class="t" style="left:39.5px;top:369.2px;width:154.3px;height:14px;line-height:14px;font-size:12.3px;text-align:right;color:#04060a;">10403</div>
<div class="t" style="left:200.7px;top:369.2px;width:178.7px;height:14px;line-height:14px;font-size:12.3px;text-align:right;color:#04060a;">66</div>
<div class="t" style="left:386.3px;top:369.2px;width:127.6px;height:14px;line-height:14px;font-size:12.3px;text-align:right;color:#04060a;">100.0</div>
<div class="t" style="left:520.8px;top:369.2px;width:181.1px;height:14px;line-height:14px;font-size:12.3px;text-align:right;color:#04060a;">9</div>
<div class="t" style="left:708.8px;top:369.2px;width:95.9px;height:14px;line-height:14px;font-size:12.3px;text-align:right;color:#04060a;">11886.6</div>
<div class="r" style="left:818px;top:370.5px;width:1px;height:2.6px;background:#80858c;"></div>
<div class="r" style="left:39.5px;top:384px;width:779.5px;height:17px;background:#ffffff;"></div>
<div class="r" style="left:0px;top:384px;width:39.5px;height:17px;background:#f6f5f4;border-right:1.3px solid #10141c;"></div>
<div class="t" style="left:4px;top:386px;height:14px;line-height:14px;font-size:12px;color:#10141c;">22</div>
<div class="t" style="left:39.5px;top:386.2px;width:154.3px;height:14px;line-height:14px;font-size:12.3px;text-align:right;color:#04060a;">10403</div>
<div class="t" style="left:200.7px;top:386.2px;width:178.7px;height:14px;line-height:14px;font-size:12.3px;text-align:right;color:#04060a;">66</div>
<div class="t" style="left:386.3px;top:386.2px;width:127.6px;height:14px;line-height:14px;font-size:12.3px;text-align:right;color:#04060a;">100.0</div>
<div class="t" style="left:520.8px;top:386.2px;width:181.1px;height:14px;line-height:14px;font-size:12.3px;text-align:right;color:#04060a;">6</div>
<div class="t" style="left:708.8px;top:386.2px;width:95.9px;height:14px;line-height:14px;font-size:12.3px;text-align:right;color:#04060a;">8648.6</div>
<div class="r" style="left:818px;top:387.5px;width:1px;height:2.6px;background:#80858c;"></div>
<div class="r" style="left:39.5px;top:401px;width:779.5px;height:17px;background:#dce4f0;"></div>
<div class="r" style="left:0px;top:401px;width:39.5px;height:17px;background:#f6f5f4;border-right:1.3px solid #10141c;"></div>
<div class="t" style="left:4px;top:403px;height:14px;line-height:14px;font-size:12px;color:#10141c;">23</div>
<div class="t" style="left:39.5px;top:403.2px;width:154.3px;height:14px;line-height:14px;font-size:12.3px;text-align:right;color:#04060a;">10405</div>
<div class="t" style="left:200.7px;top:403.2px;width:178.7px;height:14px;line-height:14px;font-size:12.3px;text-align:right;color:#04060a;">97</div>
<div class="t" style="left:386.3px;top:403.2px;width:127.6px;height:14px;line-height:14px;font-size:12.3px;text-align:right;color:#04060a;">93.3</div>
<div class="t" style="left:520.8px;top:403.2px;width:181.1px;height:14px;line-height:14px;font-size:12.3px;text-align:right;color:#04060a;">5</div>
<div class="t" style="left:708.8px;top:403.2px;width:95.9px;height:14px;line-height:14px;font-size:12.3px;text-align:right;color:#04060a;">9048.2</div>
<div class="r" style="left:818px;top:404.5px;width:1px;height:2.6px;background:#80858c;"></div>
<div class="r" style="left:39.5px;top:418px;width:779.5px;height:17px;background:#ffffff;"></div>
<div class="r" style="left:0px;top:418px;width:39.5px;height:17px;background:#f6f5f4;border-right:1.3px solid #10141c;"></div>
<div class="t" style="left:4px;top:420px;height:14px;line-height:14px;font-size:12px;color:#10141c;">24</div>
<div class="t" style="left:39.5px;top:420.2px;width:154.3px;height:14px;line-height:14px;font-size:12.3px;text-align:right;color:#04060a;">10405</div>
<div class="t" style="left:200.7px;top:420.2px;width:178.7px;height:14px;line-height:14px;font-size:12.3px;text-align:right;color:#04060a;">61</div>
<div class="t" style="left:386.3px;top:420.2px;width:127.6px;height:14px;line-height:14px;font-size:12.3px;text-align:right;color:#04060a;">73.9</div>
<div class="t" style="left:520.8px;top:420.2px;width:181.1px;height:14px;line-height:14px;font-size:12.3px;text-align:right;color:#04060a;">4</div>
<div class="t" style="left:708.8px;top:420.2px;width:95.9px;height:14px;line-height:14px;font-size:12.3px;text-align:right;color:#04060a;">4509.1</div>
<div class="r" style="left:818px;top:421.5px;width:1px;height:2.6px;background:#80858c;"></div>
<div class="r" style="left:39.5px;top:435px;width:779.5px;height:17px;background:#dce4f0;"></div>
<div class="r" style="left:0px;top:435px;width:39.5px;height:17px;background:#f6f5f4;border-right:1.3px solid #10141c;"></div>
<div class="t" style="left:4px;top:437px;height:14px;line-height:14px;font-size:12px;color:#10141c;">25</div>
<div class="t" style="left:39.5px;top:437.2px;width:154.3px;height:14px;line-height:14px;font-size:12.3px;text-align:right;color:#04060a;">10405</div>
<div class="t" style="left:200.7px;top:437.2px;width:178.7px;height:14px;line-height:14px;font-size:12.3px;text-align:right;color:#04060a;">55</div>
<div class="t" style="left:386.3px;top:437.2px;width:127.6px;height:14px;line-height:14px;font-size:12.3px;text-align:right;color:#04060a;">100.0</div>
<div class="t" style="left:520.8px;top:437.2px;width:181.1px;height:14px;line-height:14px;font-size:12.3px;text-align:right;color:#04060a;">1</div>
<div class="t" style="left:708.8px;top:437.2px;width:95.9px;height:14px;line-height:14px;font-size:12.3px;text-align:right;color:#04060a;">8289.0</div>
<div class="r" style="left:818px;top:438.5px;width:1px;height:2.6px;background:#80858c;"></div>
<div class="r" style="left:39.5px;top:452px;width:779.5px;height:17px;background:#ffffff;"></div>
<div class="r" style="left:0px;top:452px;width:39.5px;height:17px;background:#f6f5f4;border-right:1.3px solid #10141c;"></div>
<div class="t" style="left:4px;top:454px;height:14px;line-height:14px;font-size:12px;color:#10141c;">26</div>
<div class="t" style="left:39.5px;top:454.2px;width:154.3px;height:14px;line-height:14px;font-size:12.3px;text-align:right;color:#04060a;">10405</div>
<div class="t" style="left:200.7px;top:454.2px;width:178.7px;height:14px;line-height:14px;font-size:12.3px;text-align:right;color:#04060a;">76</div>
<div class="t" style="left:386.3px;top:454.2px;width:127.6px;height:14px;line-height:14px;font-size:12.3px;text-align:right;color:#04060a;">100.0</div>
<div class="t" style="left:520.8px;top:454.2px;width:181.1px;height:14px;line-height:14px;font-size:12.3px;text-align:right;color:#04060a;">3</div>
<div class="t" style="left:708.8px;top:454.2px;width:95.9px;height:14px;line-height:14px;font-size:12.3px;text-align:right;color:#04060a;">11739.7</div>
<div class="r" style="left:818px;top:455.5px;width:1px;height:2.6px;background:#80858c;"></div>
<div class="r" style="left:39.5px;top:469px;width:779.5px;height:17px;background:#dce4f0;"></div>
<div class="r" style="left:0px;top:469px;width:39.5px;height:17px;background:#f6f5f4;border-right:1.3px solid #10141c;"></div>
<div class="t" style="left:4px;top:471px;height:14px;line-height:14px;font-size:12px;color:#10141c;">27</div>
<div class="t" style="left:39.5px;top:471.2px;width:154.3px;height:14px;line-height:14px;font-size:12.3px;text-align:right;color:#04060a;">10406</div>
<div class="t" style="left:200.7px;top:471.2px;width:178.7px;height:14px;line-height:14px;font-size:12.3px;text-align:right;color:#04060a;">61</div>
<div class="t" style="left:386.3px;top:471.2px;width:127.6px;height:14px;line-height:14px;font-size:12.3px;text-align:right;color:#04060a;">100.0</div>
<div class="t" style="left:520.8px;top:471.2px;width:181.1px;height:14px;line-height:14px;font-size:12.3px;text-align:right;color:#04060a;">3</div>
<div class="t" style="left:708.8px;top:471.2px;width:95.9px;height:14px;line-height:14px;font-size:12.3px;text-align:right;color:#04060a;">8374.7</div>
<div class="r" style="left:818px;top:472.5px;width:1px;height:2.6px;background:#80858c;"></div>
<div class="r" style="left:39.5px;top:486px;width:779.5px;height:17px;background:#ffffff;"></div>
<div class="r" style="left:0px;top:486px;width:39.5px;height:17px;background:#f6f5f4;border-right:1.3px solid #10141c;"></div>
<div class="t" style="left:4px;top:488px;height:14px;line-height:14px;font-size:12px;color:#10141c;">28</div>
<div class="t" style="left:39.5px;top:488.2px;width:154.3px;height:14px;line-height:14px;font-size:12.3px;text-align:right;color:#04060a;">10406</div>
<div class="t" style="left:200.7px;top:488.2px;width:178.7px;height:14px;line-height:14px;font-size:12.3px;text-align:right;color:#04060a;">65</div>
<div class="t" style="left:386.3px;top:488.2px;width:127.6px;height:14px;line-height:14px;font-size:12.3px;text-align:right;color:#04060a;">100.0</div>
<div class="t" style="left:520.8px;top:488.2px;width:181.1px;height:14px;line-height:14px;font-size:12.3px;text-align:right;color:#04060a;">1</div>
<div class="t" style="left:708.8px;top:488.2px;width:95.9px;height:14px;line-height:14px;font-size:12.3px;text-align:right;color:#04060a;">10468.9</div>
<div class="r" style="left:818px;top:489.5px;width:1px;height:2.6px;background:#80858c;"></div>
<div class="r" style="left:39.5px;top:503px;width:779.5px;height:17px;background:#dce4f0;"></div>
<div class="r" style="left:0px;top:503px;width:39.5px;height:17px;background:#f6f5f4;border-right:1.3px solid #10141c;"></div>
<div class="t" style="left:4px;top:505px;height:14px;line-height:14px;font-size:12px;color:#10141c;">29</div>
<div class="t" style="left:39.5px;top:505.2px;width:154.3px;height:14px;line-height:14px;font-size:12.3px;text-align:right;color:#04060a;">10407</div>
<div class="t" style="left:200.7px;top:505.2px;width:178.7px;height:14px;line-height:14px;font-size:12.3px;text-align:right;color:#04060a;">59</div>
<div class="t" style="left:386.3px;top:505.2px;width:127.6px;height:14px;line-height:14px;font-size:12.3px;text-align:right;color:#04060a;">100.0</div>
<div class="t" style="left:520.8px;top:505.2px;width:181.1px;height:14px;line-height:14px;font-size:12.3px;text-align:right;color:#04060a;">11</div>
<div class="t" style="left:708.8px;top:505.2px;width:95.9px;height:14px;line-height:14px;font-size:12.3px;text-align:right;color:#04060a;">7048.1</div>
<div class="r" style="left:818px;top:506.5px;width:1px;height:2.6px;background:#80858c;"></div>
<div class="r" style="left:39.5px;top:520px;width:779.5px;height:17px;background:#ffffff;"></div>
<div class="r" style="left:0px;top:520px;width:39.5px;height:17px;background:#f6f5f4;border-right:1.3px solid #10141c;"></div>
<div class="t" style="left:4px;top:522px;height:14px;line-height:14px;font-size:12px;color:#10141c;">30</div>
<div class="t" style="left:39.5px;top:522.2px;width:154.3px;height:14px;line-height:14px;font-size:12.3px;text-align:right;color:#04060a;">10407</div>
<div class="t" style="left:200.7px;top:522.2px;width:178.7px;height:14px;line-height:14px;font-size:12.3px;text-align:right;color:#04060a;">76</div>
<div class="t" style="left:386.3px;top:522.2px;width:127.6px;height:14px;line-height:14px;font-size:12.3px;text-align:right;color:#04060a;">100.0</div>
<div class="t" style="left:520.8px;top:522.2px;width:181.1px;height:14px;line-height:14px;font-size:12.3px;text-align:right;color:#04060a;">2</div>
<div class="t" style="left:708.8px;top:522.2px;width:95.9px;height:14px;line-height:14px;font-size:12.3px;text-align:right;color:#04060a;">14082.8</div>
<div class="r" style="left:818px;top:523.5px;width:1px;height:2.6px;background:#80858c;"></div>
<div class="r" style="left:39.5px;top:537px;width:779.5px;height:17px;background:#dce4f0;"></div>
<div class="r" style="left:0px;top:537px;width:39.5px;height:17px;background:#f6f5f4;border-right:1.3px solid #10141c;"></div>
<div class="t" style="left:4px;top:539px;height:14px;line-height:14px;font-size:12px;color:#10141c;">31</div>
<div class="t" style="left:39.5px;top:539.2px;width:154.3px;height:14px;line-height:14px;font-size:12.3px;text-align:right;color:#04060a;">10407</div>
<div class="t" style="left:200.7px;top:539.2px;width:178.7px;height:14px;line-height:14px;font-size:12.3px;text-align:right;color:#04060a;">66</div>
<div class="t" style="left:386.3px;top:539.2px;width:127.6px;height:14px;line-height:14px;font-size:12.3px;text-align:right;color:#04060a;">67.0</div>
<div class="t" style="left:520.8px;top:539.2px;width:181.1px;height:14px;line-height:14px;font-size:12.3px;text-align:right;color:#04060a;">4</div>
<div class="t" style="left:708.8px;top:539.2px;width:95.9px;height:14px;line-height:14px;font-size:12.3px;text-align:right;color:#04060a;">4421.3</div>
<div class="r" style="left:818px;top:540.5px;width:1px;height:2.6px;background:#80858c;"></div>
<div class="r" style="left:39.5px;top:554px;width:779.5px;height:17px;background:#ffffff;"></div>
<div class="r" style="left:0px;top:554px;width:39.5px;height:17px;background:#f6f5f4;border-right:1.3px solid #10141c;"></div>
<div class="t" style="left:4px;top:556px;height:14px;line-height:14px;font-size:12px;color:#10141c;">32</div>
<div class="t" style="left:39.5px;top:556.2px;width:154.3px;height:14px;line-height:14px;font-size:12.3px;text-align:right;color:#04060a;">10407</div>
<div class="t" style="left:200.7px;top:556.2px;width:178.7px;height:14px;line-height:14px;font-size:12.3px;text-align:right;color:#04060a;">64</div>
<div class="t" style="left:386.3px;top:556.2px;width:127.6px;height:14px;line-height:14px;font-size:12.3px;text-align:right;color:#04060a;">40.2</div>
<div class="t" style="left:520.8px;top:556.2px;width:181.1px;height:14px;line-height:14px;font-size:12.3px;text-align:right;color:#04060a;">10</div>
<div class="t" style="left:708.8px;top:556.2px;width:95.9px;height:14px;line-height:14px;font-size:12.3px;text-align:right;color:#04060a;">2576.0</div>
<div class="r" style="left:818px;top:557.5px;width:1px;height:2.6px;background:#80858c;"></div>
<div class="r" style="left:39.5px;top:571px;width:779.5px;height:17px;background:#dce4f0;"></div>
<div class="r" style="left:0px;top:571px;width:39.5px;height:17px;background:#f6f5f4;border-right:1.3px solid #10141c;"></div>
<div class="t" style="left:4px;top:573px;height:14px;line-height:14px;font-size:12px;color:#10141c;">33</div>
<div class="t" style="left:39.5px;top:573.2px;width:154.3px;height:14px;line-height:14px;font-size:12.3px;text-align:right;color:#04060a;">10407</div>
<div class="t" style="left:200.7px;top:573.2px;width:178.7px;height:14px;line-height:14px;font-size:12.3px;text-align:right;color:#04060a;">76</div>
<div class="t" style="left:386.3px;top:573.2px;width:127.6px;height:14px;line-height:14px;font-size:12.3px;text-align:right;color:#04060a;">94.5</div>
<div class="t" style="left:520.8px;top:573.2px;width:181.1px;height:14px;line-height:14px;font-size:12.3px;text-align:right;color:#04060a;">6</div>
<div class="t" style="left:708.8px;top:573.2px;width:95.9px;height:14px;line-height:14px;font-size:12.3px;text-align:right;color:#04060a;">7182.0</div>
<div class="r" style="left:818px;top:574.5px;width:1px;height:2.6px;background:#80858c;"></div>
<div class="r" style="left:39.5px;top:588px;width:779.5px;height:17px;background:#ffffff;"></div>
<div class="r" style="left:0px;top:588px;width:39.5px;height:17px;background:#f6f5f4;border-right:1.3px solid #10141c;"></div>
<div class="t" style="left:4px;top:590px;height:14px;line-height:14px;font-size:12px;color:#10141c;">34</div>
<div class="t" style="left:39.5px;top:590.2px;width:154.3px;height:14px;line-height:14px;font-size:12.3px;text-align:right;color:#04060a;">10407</div>
<div class="t" style="left:200.7px;top:590.2px;width:178.7px;height:14px;line-height:14px;font-size:12.3px;text-align:right;color:#04060a;">59</div>
<div class="t" style="left:386.3px;top:590.2px;width:127.6px;height:14px;line-height:14px;font-size:12.3px;text-align:right;color:#04060a;">98.6</div>
<div class="t" style="left:520.8px;top:590.2px;width:181.1px;height:14px;line-height:14px;font-size:12.3px;text-align:right;color:#04060a;">5</div>
<div class="t" style="left:708.8px;top:590.2px;width:95.9px;height:14px;line-height:14px;font-size:12.3px;text-align:right;color:#04060a;">5820.4</div>
<div class="r" style="left:818px;top:591.5px;width:1px;height:2.6px;background:#80858c;"></div>
<div class="r" style="left:39.5px;top:605px;width:779.5px;height:17px;background:#dce4f0;"></div>
<div class="r" style="left:0px;top:605px;width:39.5px;height:17px;background:#f6f5f4;border-right:1.3px solid #10141c;"></div>
<div class="t" style="left:4px;top:607px;height:14px;line-height:14px;font-size:12px;color:#10141c;">35</div>
<div class="t" style="left:39.5px;top:607.2px;width:154.3px;height:14px;line-height:14px;font-size:12.3px;text-align:right;color:#04060a;">10409</div>
<div class="t" style="left:200.7px;top:607.2px;width:178.7px;height:14px;line-height:14px;font-size:12.3px;text-align:right;color:#04060a;">61</div>
<div class="t" style="left:386.3px;top:607.2px;width:127.6px;height:14px;line-height:14px;font-size:12.3px;text-align:right;color:#04060a;">29.5</div>
<div class="t" style="left:520.8px;top:607.2px;width:181.1px;height:14px;line-height:14px;font-size:12.3px;text-align:right;color:#04060a;">1</div>
<div class="t" style="left:708.8px;top:607.2px;width:95.9px;height:14px;line-height:14px;font-size:12.3px;text-align:right;color:#04060a;">1801.9</div>
<div class="r" style="left:818px;top:608.5px;width:1px;height:2.6px;background:#80858c;"></div>
<div class="r" style="left:39.5px;top:622px;width:779.5px;height:17px;background:#ffffff;"></div>
<div class="r" style="left:0px;top:622px;width:39.5px;height:17px;background:#f6f5f4;border-right:1.3px solid #10141c;"></div>
<div class="t" style="left:4px;top:624px;height:14px;line-height:14px;font-size:12px;color:#10141c;">36</div>
<div class="t" style="left:39.5px;top:624.2px;width:154.3px;height:14px;line-height:14px;font-size:12.3px;text-align:right;color:#04060a;">10412</div>
<div class="t" style="left:200.7px;top:624.2px;width:178.7px;height:14px;line-height:14px;font-size:12.3px;text-align:right;color:#04060a;">54</div>
<div class="t" style="left:386.3px;top:624.2px;width:127.6px;height:14px;line-height:14px;font-size:12.3px;text-align:right;color:#04060a;">100.0</div>
<div class="t" style="left:520.8px;top:624.2px;width:181.1px;height:14px;line-height:14px;font-size:12.3px;text-align:right;color:#04060a;">5</div>
<div class="t" style="left:708.8px;top:624.2px;width:95.9px;height:14px;line-height:14px;font-size:12.3px;text-align:right;color:#04060a;">5951.3</div>
<div class="r" style="left:818px;top:625.5px;width:1px;height:2.6px;background:#80858c;"></div>
<div class="r" style="left:39.5px;top:639px;width:779.5px;height:17px;background:#dce4f0;"></div>
<div class="r" style="left:0px;top:639px;width:39.5px;height:17px;background:#f6f5f4;border-right:1.3px solid #10141c;"></div>
<div class="t" style="left:4px;top:641px;height:14px;line-height:14px;font-size:12px;color:#10141c;">37</div>
<div class="t" style="left:39.5px;top:641.2px;width:154.3px;height:14px;line-height:14px;font-size:12.3px;text-align:right;color:#04060a;">10412</div>
<div class="t" style="left:200.7px;top:641.2px;width:178.7px;height:14px;line-height:14px;font-size:12.3px;text-align:right;color:#04060a;">56</div>
<div class="t" style="left:386.3px;top:641.2px;width:127.6px;height:14px;line-height:14px;font-size:12.3px;text-align:right;color:#04060a;">98.2</div>
<div class="t" style="left:520.8px;top:641.2px;width:181.1px;height:14px;line-height:14px;font-size:12.3px;text-align:right;color:#04060a;">8</div>
<div class="t" style="left:708.8px;top:641.2px;width:95.9px;height:14px;line-height:14px;font-size:12.3px;text-align:right;color:#04060a;">5498.1</div>
<div class="r" style="left:818px;top:642.5px;width:1px;height:2.6px;background:#80858c;"></div>
<div class="r" style="left:39.5px;top:656px;width:779.5px;height:17px;background:#ffffff;"></div>
<div class="r" style="left:0px;top:656px;width:39.5px;height:17px;background:#f6f5f4;border-right:1.3px solid #10141c;"></div>
<div class="t" style="left:4px;top:658px;height:14px;line-height:14px;font-size:12px;color:#10141c;">38</div>
<div class="t" style="left:39.5px;top:658.2px;width:154.3px;height:14px;line-height:14px;font-size:12.3px;text-align:right;color:#04060a;">10412</div>
<div class="t" style="left:200.7px;top:658.2px;width:178.7px;height:14px;line-height:14px;font-size:12.3px;text-align:right;color:#04060a;">60</div>
<div class="t" style="left:386.3px;top:658.2px;width:127.6px;height:14px;line-height:14px;font-size:12.3px;text-align:right;color:#04060a;">100.0</div>
<div class="t" style="left:520.8px;top:658.2px;width:181.1px;height:14px;line-height:14px;font-size:12.3px;text-align:right;color:#04060a;">9</div>
<div class="t" style="left:708.8px;top:658.2px;width:95.9px;height:14px;line-height:14px;font-size:12.3px;text-align:right;color:#04060a;">11887.8</div>
<div class="r" style="left:818px;top:659.5px;width:1px;height:2.6px;background:#80858c;"></div>
<div class="r" style="left:39.5px;top:673px;width:779.5px;height:17px;background:#dce4f0;"></div>
<div class="r" style="left:0px;top:673px;width:39.5px;height:17px;background:#f6f5f4;border-right:1.3px solid #10141c;"></div>
<div class="t" style="left:4px;top:675px;height:14px;line-height:14px;font-size:12px;color:#10141c;">39</div>
<div class="t" style="left:39.5px;top:675.2px;width:154.3px;height:14px;line-height:14px;font-size:12.3px;text-align:right;color:#04060a;">10412</div>
<div class="t" style="left:200.7px;top:675.2px;width:178.7px;height:14px;line-height:14px;font-size:12.3px;text-align:right;color:#04060a;">70</div>
<div class="t" style="left:386.3px;top:675.2px;width:127.6px;height:14px;line-height:14px;font-size:12.3px;text-align:right;color:#04060a;">100.0</div>
<div class="t" style="left:520.8px;top:675.2px;width:181.1px;height:14px;line-height:14px;font-size:12.3px;text-align:right;color:#04060a;">10</div>
<div class="t" style="left:708.8px;top:675.2px;width:95.9px;height:14px;line-height:14px;font-size:12.3px;text-align:right;color:#04060a;">8498.0</div>
<div class="r" style="left:818px;top:676.5px;width:1px;height:2.6px;background:#80858c;"></div>
<div class="r" style="left:39.5px;top:690px;width:779.5px;height:17px;background:#ffffff;"></div>
<div class="r" style="left:0px;top:690px;width:39.5px;height:17px;background:#f6f5f4;border-right:1.3px solid #10141c;"></div>
<div class="t" style="left:4px;top:692px;height:14px;line-height:14px;font-size:12px;color:#10141c;">40</div>
<div class="t" style="left:39.5px;top:692.2px;width:154.3px;height:14px;line-height:14px;font-size:12.3px;text-align:right;color:#04060a;">10413</div>
<div class="t" style="left:200.7px;top:692.2px;width:178.7px;height:14px;line-height:14px;font-size:12.3px;text-align:right;color:#04060a;">51</div>
<div class="t" style="left:386.3px;top:692.2px;width:127.6px;height:14px;line-height:14px;font-size:12.3px;text-align:right;color:#04060a;">63.8</div>
<div class="t" style="left:520.8px;top:692.2px;width:181.1px;height:14px;line-height:14px;font-size:12.3px;text-align:right;color:#04060a;">4</div>
<div class="t" style="left:708.8px;top:692.2px;width:95.9px;height:14px;line-height:14px;font-size:12.3px;text-align:right;color:#04060a;">3256.4</div>
<div class="r" style="left:818px;top:693.5px;width:1px;height:2.6px;background:#80858c;"></div>
<div class="r" style="left:39.5px;top:707px;width:779.5px;height:17px;background:#dce4f0;"></div>
<div class="r" style="left:0px;top:707px;width:39.5px;height:17px;background:#f6f5f4;border-right:1.3px solid #10141c;"></div>
<div class="t" style="left:4px;top:709px;height:14px;line-height:14px;font-size:12px;color:#10141c;">41</div>
<div class="t" style="left:39.5px;top:709.2px;width:154.3px;height:14px;line-height:14px;font-size:12.3px;text-align:right;color:#04060a;">10414</div>
<div class="t" style="left:200.7px;top:709.2px;width:178.7px;height:14px;line-height:14px;font-size:12.3px;text-align:right;color:#04060a;">60</div>
<div class="t" style="left:386.3px;top:709.2px;width:127.6px;height:14px;line-height:14px;font-size:12.3px;text-align:right;color:#04060a;">100.0</div>
<div class="t" style="left:520.8px;top:709.2px;width:181.1px;height:14px;line-height:14px;font-size:12.3px;text-align:right;color:#04060a;">5</div>
<div class="t" style="left:708.8px;top:709.2px;width:95.9px;height:14px;line-height:14px;font-size:12.3px;text-align:right;color:#04060a;">6107.4</div>
<div class="r" style="left:818px;top:710.5px;width:1px;height:2.6px;background:#80858c;"></div>
<div class="r" style="left:39.5px;top:724px;width:779.5px;height:17px;background:#ffffff;"></div>
<div class="r" style="left:0px;top:724px;width:39.5px;height:17px;background:#f6f5f4;border-right:1.3px solid #10141c;"></div>
<div class="t" style="left:4px;top:726px;height:14px;line-height:14px;font-size:12px;color:#10141c;">42</div>
<div class="t" style="left:39.5px;top:726.2px;width:154.3px;height:14px;line-height:14px;font-size:12.3px;text-align:right;color:#04060a;">10414</div>
<div class="t" style="left:200.7px;top:726.2px;width:178.7px;height:14px;line-height:14px;font-size:12.3px;text-align:right;color:#04060a;">51</div>
<div class="t" style="left:386.3px;top:726.2px;width:127.6px;height:14px;line-height:14px;font-size:12.3px;text-align:right;color:#04060a;">76.3</div>
<div class="t" style="left:520.8px;top:726.2px;width:181.1px;height:14px;line-height:14px;font-size:12.3px;text-align:right;color:#04060a;">2</div>
<div class="t" style="left:708.8px;top:726.2px;width:95.9px;height:14px;line-height:14px;font-size:12.3px;text-align:right;color:#04060a;">3891.8</div>
<div class="r" style="left:818px;top:727.5px;width:1px;height:2.6px;background:#80858c;"></div>
<div class="r" style="left:39.5px;top:741px;width:779.5px;height:17px;background:#dce4f0;"></div>
<div class="r" style="left:0px;top:741px;width:39.5px;height:17px;background:#f6f5f4;border-right:1.3px solid #10141c;"></div>
<div class="t" style="left:4px;top:743px;height:14px;line-height:14px;font-size:12px;color:#10141c;">43</div>
<div class="t" style="left:39.5px;top:743.2px;width:154.3px;height:14px;line-height:14px;font-size:12.3px;text-align:right;color:#04060a;">10415</div>
<div class="t" style="left:200.7px;top:743.2px;width:178.7px;height:14px;line-height:14px;font-size:12.3px;text-align:right;color:#04060a;">51</div>
<div class="t" style="left:386.3px;top:743.2px;width:127.6px;height:14px;line-height:14px;font-size:12.3px;text-align:right;color:#04060a;">100.0</div>
<div class="t" style="left:520.8px;top:743.2px;width:181.1px;height:14px;line-height:14px;font-size:12.3px;text-align:right;color:#04060a;">5</div>
<div class="t" style="left:708.8px;top:743.2px;width:95.9px;height:14px;line-height:14px;font-size:12.3px;text-align:right;color:#04060a;">6209.2</div>
<div class="r" style="left:818px;top:744.5px;width:1px;height:2.6px;background:#80858c;"></div>
<div class="r" style="left:39.5px;top:758px;width:779.5px;height:17px;background:#ffffff;"></div>
<div class="r" style="left:0px;top:758px;width:39.5px;height:17px;background:#f6f5f4;border-right:1.3px solid #10141c;"></div>
<div class="t" style="left:4px;top:760px;height:14px;line-height:14px;font-size:12px;color:#10141c;">44</div>
<div class="t" style="left:39.5px;top:760.2px;width:154.3px;height:14px;line-height:14px;font-size:12.3px;text-align:right;color:#04060a;">10417</div>
<div class="t" style="left:200.7px;top:760.2px;width:178.7px;height:14px;line-height:14px;font-size:12.3px;text-align:right;color:#04060a;">66</div>
<div class="t" style="left:386.3px;top:760.2px;width:127.6px;height:14px;line-height:14px;font-size:12.3px;text-align:right;color:#04060a;">100.0</div>
<div class="t" style="left:520.8px;top:760.2px;width:181.1px;height:14px;line-height:14px;font-size:12.3px;text-align:right;color:#04060a;">2</div>
<div class="t" style="left:708.8px;top:760.2px;width:95.9px;height:14px;line-height:14px;font-size:12.3px;text-align:right;color:#04060a;">7516.1</div>
<div class="r" style="left:818px;top:761.5px;width:1px;height:2.6px;background:#80858c;"></div>
<div class="r" style="left:39.5px;top:775px;width:779.5px;height:17px;background:#dce4f0;"></div>
<div class="r" style="left:0px;top:775px;width:39.5px;height:17px;background:#f6f5f4;border-right:1.3px solid #10141c;"></div>
<div class="t" style="left:4px;top:777px;height:14px;line-height:14px;font-size:12px;color:#10141c;">45</div>
<div class="t" style="left:39.5px;top:777.2px;width:154.3px;height:14px;line-height:14px;font-size:12.3px;text-align:right;color:#04060a;">10417</div>
<div class="t" style="left:200.7px;top:777.2px;width:178.7px;height:14px;line-height:14px;font-size:12.3px;text-align:right;color:#04060a;">56</div>
<div class="t" style="left:386.3px;top:777.2px;width:127.6px;height:14px;line-height:14px;font-size:12.3px;text-align:right;color:#04060a;">100.0</div>
<div class="t" style="left:520.8px;top:777.2px;width:181.1px;height:14px;line-height:14px;font-size:12.3px;text-align:right;color:#04060a;">4</div>
<div class="t" style="left:708.8px;top:777.2px;width:95.9px;height:14px;line-height:14px;font-size:12.3px;text-align:right;color:#04060a;">9218.2</div>
<div class="r" style="left:818px;top:778.5px;width:1px;height:2.6px;background:#80858c;"></div>
<div class="r" style="left:39.5px;top:792px;width:779.5px;height:17px;background:#ffffff;"></div>
<div class="r" style="left:0px;top:792px;width:39.5px;height:17px;background:#f6f5f4;border-right:1.3px solid #10141c;"></div>
<div class="t" style="left:4px;top:794px;height:14px;line-height:14px;font-size:12px;color:#10141c;">46</div>
<div class="t" style="left:39.5px;top:794.2px;width:154.3px;height:14px;line-height:14px;font-size:12.3px;text-align:right;color:#04060a;">10419</div>
<div class="t" style="left:200.7px;top:794.2px;width:178.7px;height:14px;line-height:14px;font-size:12.3px;text-align:right;color:#04060a;">55</div>
<div class="t" style="left:386.3px;top:794.2px;width:127.6px;height:14px;line-height:14px;font-size:12.3px;text-align:right;color:#04060a;">100.0</div>
<div class="t" style="left:520.8px;top:794.2px;width:181.1px;height:14px;line-height:14px;font-size:12.3px;text-align:right;color:#04060a;">2</div>
<div class="t" style="left:708.8px;top:794.2px;width:95.9px;height:14px;line-height:14px;font-size:12.3px;text-align:right;color:#04060a;">7695.6</div>
<div class="r" style="left:818px;top:795.5px;width:1px;height:2.6px;background:#80858c;"></div>
<div class="r" style="left:39.5px;top:43.7px;width:779.5px;height:1px;background:#f1f4f9;"></div>
<div class="r" style="left:0px;top:43.7px;width:39.5px;height:1.1px;background:#10141c;"></div>
<div class="r" style="left:39.5px;top:60.7px;width:779.5px;height:1px;background:#f1f4f9;"></div>
<div class="r" style="left:0px;top:60.7px;width:39.5px;height:1.1px;background:#10141c;"></div>
<div class="r" style="left:39.5px;top:77.7px;width:779.5px;height:1px;background:#f1f4f9;"></div>
<div class="r" style="left:0px;top:77.7px;width:39.5px;height:1.1px;background:#10141c;"></div>
<div class="r" style="left:39.5px;top:94.7px;width:779.5px;height:1px;background:#f1f4f9;"></div>
<div class="r" style="left:0px;top:94.7px;width:39.5px;height:1.1px;background:#10141c;"></div>
<div class="r" style="left:39.5px;top:111.7px;width:779.5px;height:1px;background:#f1f4f9;"></div>
<div class="r" style="left:0px;top:111.7px;width:39.5px;height:1.1px;background:#10141c;"></div>
<div class="r" style="left:39.5px;top:128.7px;width:779.5px;height:1px;background:#f1f4f9;"></div>
<div class="r" style="left:0px;top:128.7px;width:39.5px;height:1.1px;background:#10141c;"></div>
<div class="r" style="left:39.5px;top:145.7px;width:779.5px;height:1px;background:#f1f4f9;"></div>
<div class="r" style="left:0px;top:145.7px;width:39.5px;height:1.1px;background:#10141c;"></div>
<div class="r" style="left:39.5px;top:162.7px;width:779.5px;height:1px;background:#f1f4f9;"></div>
<div class="r" style="left:0px;top:162.7px;width:39.5px;height:1.1px;background:#10141c;"></div>
<div class="r" style="left:39.5px;top:179.7px;width:779.5px;height:1px;background:#f1f4f9;"></div>
<div class="r" style="left:0px;top:179.7px;width:39.5px;height:1.1px;background:#10141c;"></div>
<div class="r" style="left:39.5px;top:196.7px;width:779.5px;height:1px;background:#f1f4f9;"></div>
<div class="r" style="left:0px;top:196.7px;width:39.5px;height:1.1px;background:#10141c;"></div>
<div class="r" style="left:39.5px;top:213.7px;width:779.5px;height:1px;background:#f1f4f9;"></div>
<div class="r" style="left:0px;top:213.7px;width:39.5px;height:1.1px;background:#10141c;"></div>
<div class="r" style="left:39.5px;top:230.7px;width:779.5px;height:1px;background:#f1f4f9;"></div>
<div class="r" style="left:0px;top:230.7px;width:39.5px;height:1.1px;background:#10141c;"></div>
<div class="r" style="left:39.5px;top:247.7px;width:779.5px;height:1px;background:#f1f4f9;"></div>
<div class="r" style="left:0px;top:247.7px;width:39.5px;height:1.1px;background:#10141c;"></div>
<div class="r" style="left:39.5px;top:264.7px;width:779.5px;height:1px;background:#f1f4f9;"></div>
<div class="r" style="left:0px;top:264.7px;width:39.5px;height:1.1px;background:#10141c;"></div>
<div class="r" style="left:39.5px;top:281.7px;width:779.5px;height:1px;background:#f1f4f9;"></div>
<div class="r" style="left:0px;top:281.7px;width:39.5px;height:1.1px;background:#10141c;"></div>
<div class="r" style="left:39.5px;top:298.7px;width:779.5px;height:1px;background:#f1f4f9;"></div>
<div class="r" style="left:0px;top:298.7px;width:39.5px;height:1.1px;background:#10141c;"></div>
<div class="r" style="left:39.5px;top:315.7px;width:779.5px;height:1px;background:#f1f4f9;"></div>
<div class="r" style="left:0px;top:315.7px;width:39.5px;height:1.1px;background:#10141c;"></div>
<div class="r" style="left:39.5px;top:332.7px;width:779.5px;height:1px;background:#f1f4f9;"></div>
<div class="r" style="left:0px;top:332.7px;width:39.5px;height:1.1px;background:#10141c;"></div>
<div class="r" style="left:39.5px;top:349.7px;width:779.5px;height:1px;background:#f1f4f9;"></div>
<div class="r" style="left:0px;top:349.7px;width:39.5px;height:1.1px;background:#10141c;"></div>
<div class="r" style="left:39.5px;top:366.7px;width:779.5px;height:1px;background:#f1f4f9;"></div>
<div class="r" style="left:0px;top:366.7px;width:39.5px;height:1.1px;background:#10141c;"></div>
<div class="r" style="left:39.5px;top:383.7px;width:779.5px;height:1px;background:#f1f4f9;"></div>
<div class="r" style="left:0px;top:383.7px;width:39.5px;height:1.1px;background:#10141c;"></div>
<div class="r" style="left:39.5px;top:400.7px;width:779.5px;height:1px;background:#f1f4f9;"></div>
<div class="r" style="left:0px;top:400.7px;width:39.5px;height:1.1px;background:#10141c;"></div>
<div class="r" style="left:39.5px;top:417.7px;width:779.5px;height:1px;background:#f1f4f9;"></div>
<div class="r" style="left:0px;top:417.7px;width:39.5px;height:1.1px;background:#10141c;"></div>
<div class="r" style="left:39.5px;top:434.7px;width:779.5px;height:1px;background:#f1f4f9;"></div>
<div class="r" style="left:0px;top:434.7px;width:39.5px;height:1.1px;background:#10141c;"></div>
<div class="r" style="left:39.5px;top:451.7px;width:779.5px;height:1px;background:#f1f4f9;"></div>
<div class="r" style="left:0px;top:451.7px;width:39.5px;height:1.1px;background:#10141c;"></div>
<div class="r" style="left:39.5px;top:468.7px;width:779.5px;height:1px;background:#f1f4f9;"></div>
<div class="r" style="left:0px;top:468.7px;width:39.5px;height:1.1px;background:#10141c;"></div>
<div class="r" style="left:39.5px;top:485.7px;width:779.5px;height:1px;background:#f1f4f9;"></div>
<div class="r" style="left:0px;top:485.7px;width:39.5px;height:1.1px;background:#10141c;"></div>
<div class="r" style="left:39.5px;top:502.7px;width:779.5px;height:1px;background:#f1f4f9;"></div>
<div class="r" style="left:0px;top:502.7px;width:39.5px;height:1.1px;background:#10141c;"></div>
<div class="r" style="left:39.5px;top:519.7px;width:779.5px;height:1px;background:#f1f4f9;"></div>
<div class="r" style="left:0px;top:519.7px;width:39.5px;height:1.1px;background:#10141c;"></div>
<div class="r" style="left:39.5px;top:536.7px;width:779.5px;height:1px;background:#f1f4f9;"></div>
<div class="r" style="left:0px;top:536.7px;width:39.5px;height:1.1px;background:#10141c;"></div>
<div class="r" style="left:39.5px;top:553.7px;width:779.5px;height:1px;background:#f1f4f9;"></div>
<div class="r" style="left:0px;top:553.7px;width:39.5px;height:1.1px;background:#10141c;"></div>
<div class="r" style="left:39.5px;top:570.7px;width:779.5px;height:1px;background:#f1f4f9;"></div>
<div class="r" style="left:0px;top:570.7px;width:39.5px;height:1.1px;background:#10141c;"></div>
<div class="r" style="left:39.5px;top:587.7px;width:779.5px;height:1px;background:#f1f4f9;"></div>
<div class="r" style="left:0px;top:587.7px;width:39.5px;height:1.1px;background:#10141c;"></div>
<div class="r" style="left:39.5px;top:604.7px;width:779.5px;height:1px;background:#f1f4f9;"></div>
<div class="r" style="left:0px;top:604.7px;width:39.5px;height:1.1px;background:#10141c;"></div>
<div class="r" style="left:39.5px;top:621.7px;width:779.5px;height:1px;background:#f1f4f9;"></div>
<div class="r" style="left:0px;top:621.7px;width:39.5px;height:1.1px;background:#10141c;"></div>
<div class="r" style="left:39.5px;top:638.7px;width:779.5px;height:1px;background:#f1f4f9;"></div>
<div class="r" style="left:0px;top:638.7px;width:39.5px;height:1.1px;background:#10141c;"></div>
<div class="r" style="left:39.5px;top:655.7px;width:779.5px;height:1px;background:#f1f4f9;"></div>
<div class="r" style="left:0px;top:655.7px;width:39.5px;height:1.1px;background:#10141c;"></div>
<div class="r" style="left:39.5px;top:672.7px;width:779.5px;height:1px;background:#f1f4f9;"></div>
<div class="r" style="left:0px;top:672.7px;width:39.5px;height:1.1px;background:#10141c;"></div>
<div class="r" style="left:39.5px;top:689.7px;width:779.5px;height:1px;background:#f1f4f9;"></div>
<div class="r" style="left:0px;top:689.7px;width:39.5px;height:1.1px;background:#10141c;"></div>
<div class="r" style="left:39.5px;top:706.7px;width:779.5px;height:1px;background:#f1f4f9;"></div>
<div class="r" style="left:0px;top:706.7px;width:39.5px;height:1.1px;background:#10141c;"></div>
<div class="r" style="left:39.5px;top:723.7px;width:779.5px;height:1px;background:#f1f4f9;"></div>
<div class="r" style="left:0px;top:723.7px;width:39.5px;height:1.1px;background:#10141c;"></div>
<div class="r" style="left:39.5px;top:740.7px;width:779.5px;height:1px;background:#f1f4f9;"></div>
<div class="r" style="left:0px;top:740.7px;width:39.5px;height:1.1px;background:#10141c;"></div>
<div class="r" style="left:39.5px;top:757.7px;width:779.5px;height:1px;background:#f1f4f9;"></div>
<div class="r" style="left:0px;top:757.7px;width:39.5px;height:1.1px;background:#10141c;"></div>
<div class="r" style="left:39.5px;top:774.7px;width:779.5px;height:1px;background:#f1f4f9;"></div>
<div class="r" style="left:0px;top:774.7px;width:39.5px;height:1.1px;background:#10141c;"></div>
<div class="r" style="left:39.5px;top:791.7px;width:779.5px;height:1px;background:#f1f4f9;"></div>
<div class="r" style="left:0px;top:791.7px;width:39.5px;height:1.1px;background:#10141c;"></div>
<div class="r" style="left:39.5px;top:808.7px;width:779.5px;height:1px;background:#f1f4f9;"></div>
<div class="r" style="left:0px;top:808.7px;width:39.5px;height:1.1px;background:#10141c;"></div>
<div class="r" style="left:200.2px;top:27px;width:1px;height:775px;background:rgba(255,255,255,0.55);"></div>
<div class="r" style="left:200.2px;top:27px;width:1px;height:775px;background:rgba(120,120,130,0.10);"></div>
<div class="r" style="left:385.8px;top:27px;width:1px;height:775px;background:rgba(255,255,255,0.55);"></div>
<div class="r" style="left:385.8px;top:27px;width:1px;height:775px;background:rgba(120,120,130,0.10);"></div>
<div class="r" style="left:520.3px;top:27px;width:1px;height:775px;background:rgba(255,255,255,0.55);"></div>
<div class="r" style="left:520.3px;top:27px;width:1px;height:775px;background:rgba(120,120,130,0.10);"></div>
<div class="r" style="left:708.3px;top:27px;width:1px;height:775px;background:rgba(255,255,255,0.55);"></div>
<div class="r" style="left:708.3px;top:27px;width:1px;height:775px;background:rgba(120,120,130,0.10);"></div>
<div class="r" style="left:811.1px;top:27px;width:1px;height:775px;background:rgba(255,255,255,0.55);"></div>
<div class="r" style="left:811.1px;top:27px;width:1px;height:775px;background:rgba(120,120,130,0.10);"></div>
<div class="r" style="left:0px;top:26.6px;width:819px;height:1.1px;background:#10141c;"></div>
<div class="r" style="left:39.5px;top:27px;width:161px;height:17px;border:2px solid #0a0c10;"></div>
</div>
<svg class="r" style="left:1721px;top:276.5px" width="16" height="16" viewBox="0 0 16 16" preserveAspectRatio="none"><rect x="1.2" y="0.7" width="13.6" height="12.4" fill="#ffffff" stroke="#1a8cd8" stroke-width="1.3"/><rect x="6.2" y="1.2" width="5.6" height="7.4" fill="#5cc4f0"/><rect x="11.6" y="0.7" width="3.2" height="12.4" fill="#1a8cd8"/><circle cx="3.6" cy="11.6" r="3.1" fill="#1a8cd8"/><circle cx="3.6" cy="11.6" r="1.1" fill="#fff"/><path d="M3.6 7.6V15.6M-0.4 11.6H7.6M0.8 8.8L6.4 14.4M6.4 8.8L0.8 14.4" stroke="#1a8cd8" stroke-width="1.1"/><circle cx="3.6" cy="11.6" r="1.1" fill="#fff"/></svg>
<div class="t" style="left:1729.5px;top:313px;width:0;height:0;"><div style="position:absolute;left:-50px;top:-10px;width:100px;height:20px;line-height:20px;text-align:center;font-size:13px;letter-spacing:-0.653px;color:#1e2224;transform:rotate(90deg);">Panels</div></div>
<svg class="r" style="left:1721px;top:348.5px" width="14.6" height="15.2" viewBox="0 0 14.6 15.2" preserveAspectRatio="none"><circle cx="3.3" cy="3.4" r="3.1" fill="#2f92da"/><circle cx="11.3" cy="3.4" r="3.1" fill="#2f92da"/><circle cx="3.3" cy="11.6" r="3.1" fill="#2f92da"/><circle cx="11.3" cy="11.6" r="3.1" fill="#f0a23a"/><path d="M1.6 3.4H5M9.6 3.4H13M11.3 1.8V5M1.9 10.2L4.7 13M4.7 10.2L1.9 13M9.7 10.8H12.9M9.7 12.4H12.9" stroke="#e8f3fb" stroke-width="0.9"/></svg>
<svg class="r" style="left:1721px;top:370.2px" width="14.8" height="14.8" viewBox="0 0 14.8 14.8" preserveAspectRatio="none"><circle cx="7.4" cy="7.4" r="6.5" fill="#eef6fb" stroke="#2f92da" stroke-width="1.5"/><circle cx="5.3" cy="5.4" r="1" fill="#5a86a8"/><circle cx="9.5" cy="5.4" r="1" fill="#5a86a8"/><circle cx="5.3" cy="9.4" r="1" fill="#5a86a8"/><circle cx="9.5" cy="9.4" r="1" fill="#5a86a8"/></svg>
<svg class="r" style="left:1721px;top:392.8px" width="14.6" height="14" viewBox="0 0 14.6 14" preserveAspectRatio="none"><rect x="0.6" y="0.6" width="13.4" height="12.8" fill="#fff" stroke="#1a8cd8" stroke-width="1.2"/><path d="M1.2 2.2H13.4M1.2 5.4H13.4" stroke="#1a8cd8" stroke-width="1.6" stroke-dasharray="1.6 1.6"/><path d="M2.8 3.8H13.4M2.8 7H13.4" stroke="#1a8cd8" stroke-width="1.6" stroke-dasharray="1.6 1.6"/><path d="M0.6 1.2H14" stroke="#1a8cd8" stroke-width="1.2"/></svg>
<svg class="r" style="left:1721px;top:413.6px" width="14.6" height="16.4" viewBox="0 0 14.6 16.4" preserveAspectRatio="none"><rect x="0.6" y="4.8" width="13.4" height="10.8" rx="1" fill="#fff" stroke="#1a8cd8" stroke-width="1.2"/><rect x="0.6" y="4.8" width="13.4" height="3" fill="#1a8cd8"/><path d="M0.6 11.4H14M9.6 7.6V15.6" stroke="#1a8cd8" stroke-width="1.1"/><rect x="3.6" y="3" width="3.2" height="12.8" fill="#f5a030"/><path d="M3.6 8.4H6.8M3.6 11.4H6.8" stroke="#fbe29a" stroke-width="1"/><path d="M5.2 0V3M3.8 1.4H6.6" stroke="#f08a24" stroke-width="1.1"/></svg>
<svg class="r" style="left:1721px;top:436.8px" width="14.6" height="14.6" viewBox="0 0 14.6 14.6" preserveAspectRatio="none"><rect x="0.6" y="0.6" width="13.4" height="13.2" fill="#fff" stroke="#1a8cd8" stroke-width="1.2"/><rect x="0.6" y="0.6" width="13.4" height="2.6" fill="#1a8cd8"/><rect x="1.4" y="3.8" width="6.6" height="5.4" fill="#56bff0"/><rect x="7.6" y="9.4" width="7" height="5.2" fill="#e3e0de"/><path d="M9.4 10.2V13.8M14 10.2V13.8M9.4 12H14" stroke="#1a8cd8" stroke-width="1.1"/></svg>
<svg class="r" style="transform:rotate(-35deg);left:906px;top:1077.5px" width="16" height="16" viewBox="0 0 16 16" preserveAspectRatio="none"><path d="M2.4 9.6V6.4Q2.4 3.6 5.2 3.6H10.6M13.6 6.4V9.6Q13.6 12.4 10.8 12.4H5.4" fill="none" stroke="#1a8cd8" stroke-width="2"/><path d="M9.2 0.6L12.8 3.6L9.2 6.6M6.8 9.4L3.2 12.4L6.8 15.4" fill="none" stroke="#1a8cd8" stroke-width="2"/></svg>
<div class="t" style="left:934px;top:1078px;height:16px;line-height:16px;font-size:12.3px;color:#2e3436;letter-spacing:-0.180px;">Refresh</div>
<svg class="r" style="left:990px;top:1084px" width="10" height="5" viewBox="0 0 10 5" preserveAspectRatio="none"><path d="M0 0H10 L5 5Z" fill="#2e3436"/></svg>
<div class="r" style="left:1016px;top:1080px;width:2px;height:2px;background:#b9b3ad;"></div>
<div class="r" style="left:1016px;top:1084px;width:2px;height:2px;background:#b9b3ad;"></div>
<div class="r" style="left:1016px;top:1088px;width:2px;height:2px;background:#b9b3ad;"></div>
<div class="r" style="left:1016px;top:1092px;width:2px;height:2px;background:#b9b3ad;"></div>
<svg class="r" style="left:1030.5px;top:1078px" width="15" height="15" viewBox="0 0 15 15" preserveAspectRatio="none"><circle cx="7.5" cy="7.5" r="6.7" fill="#f2faf2" stroke="#6cc070" stroke-width="1.2"/><path d="M4 7.8L6.6 10.4L11 5" fill="none" stroke="#6cc070" stroke-width="1.4"/></svg>
<div class="t" style="left:1058.5px;top:1078px;height:16px;line-height:16px;font-size:12.3px;color:#a3a5a5;letter-spacing:-0.516px;">Save</div>
<svg class="r" style="left:1098.5px;top:1083.8px" width="10" height="5.4" viewBox="0 0 10 5.4" preserveAspectRatio="none"><path d="M0 0H10 L5 5.4Z" fill="#a8a6a4"/></svg>
<svg class="r" style="left:1116.5px;top:1079.5px" width="13" height="12" viewBox="0 0 13 12" preserveAspectRatio="none"><rect x="0.6" y="0.6" width="11.8" height="10.8" fill="#f6c9c4" stroke="#ee8a80" stroke-width="1"/><path d="M3.4 2.8L9.6 9.2M9.6 2.8L3.4 9.2" stroke="#ea6a5e" stroke-width="1.1"/></svg>
<div class="t" style="left:1143px;top:1078px;height:16px;line-height:16px;font-size:12.3px;color:#a3a5a5;letter-spacing:0.041px;">Cancel</div>
<div class="r" style="left:1193px;top:1080px;width:2px;height:2px;background:#b9b3ad;"></div>
<div class="r" style="left:1193px;top:1084px;width:2px;height:2px;background:#b9b3ad;"></div>
<div class="r" style="left:1193px;top:1088px;width:2px;height:2px;background:#b9b3ad;"></div>
<div class="r" style="left:1193px;top:1092px;width:2px;height:2px;background:#b9b3ad;"></div>
<svg class="r" style="left:1212px;top:1078.5px" width="16" height="15" viewBox="0 0 16 15" preserveAspectRatio="none"><path d="M0 1.4H14.6M0 6H12M0 10.6H6.6" stroke="#1a8cd8" stroke-width="1.6"/><path d="M8 14.2L8.6 11.4L13.4 6.8L15.2 8.6L10.6 13.4Z" fill="#1a8cd8"/></svg>
<svg class="r" style="left:1238.5px;top:1078.5px" width="16" height="15" viewBox="0 0 16 15" preserveAspectRatio="none"><path d="M0 1.4H14.6M0 6H7.6M0 10.6H6.6" stroke="#1a8cd8" stroke-width="1.6"/><path d="M8.4 10.4H15.6M12 6.8V14" stroke="#1f9d3a" stroke-width="2"/></svg>
<svg class="r" style="left:1265.5px;top:1078.5px" width="16" height="15" viewBox="0 0 16 15" preserveAspectRatio="none"><path d="M0.6 1.4H14.8M0.6 6H3.4M0.6 10.6H3.4" stroke="#1a8cd8" stroke-width="1.6"/><path d="M7.2 5.4Q4.8 5.4 4.8 7.6V11Q4.8 13.4 7.2 13.4M12 5.4Q14.6 5.4 14.6 7.6V11Q14.6 13.4 12 13.4" fill="none" stroke="#1a8cd8" stroke-width="1.3"/><path d="M7.2 9.4H12.2M9.7 7V11.8" stroke="#1a8cd8" stroke-width="1.3"/></svg>
<svg class="r" style="left:1293px;top:1078.5px" width="16" height="15" viewBox="0 0 16 15" preserveAspectRatio="none"><path d="M0 1.4H14.6M0 6H7.6M0 10.6H6.6" stroke="#1a8cd8" stroke-width="1.6"/><path d="M8.4 10.4H15.6" stroke="#e03a24" stroke-width="2.2"/></svg>
<div class="r" style="left:1325px;top:1080px;width:2px;height:2px;background:#b9b3ad;"></div>
<div class="r" style="left:1325px;top:1084px;width:2px;height:2px;background:#b9b3ad;"></div>
<div class="r" style="left:1325px;top:1088px;width:2px;height:2px;background:#b9b3ad;"></div>
<div class="r" style="left:1325px;top:1092px;width:2px;height:2px;background:#b9b3ad;"></div>
<svg class="r" style="left:1343.5px;top:1078.5px" width="14" height="14" viewBox="0 0 14 14" preserveAspectRatio="none"><path d="M1.2 0.6V13.4" stroke="#6eb3e0" stroke-width="1.8"/><path d="M12 1L5.4 7L12 13" fill="none" stroke="#6eb3e0" stroke-width="1.8"/></svg>
<svg class="r" style="left:1372.5px;top:1078.5px" width="11" height="14" viewBox="0 0 11 14" preserveAspectRatio="none"><path d="M9 1L2.4 7L9 13" fill="none" stroke="#6eb3e0" stroke-width="1.8"/></svg>
<svg class="r" style="left:1400.5px;top:1078.5px" width="11" height="14" viewBox="0 0 11 14" preserveAspectRatio="none"><path d="M2 1L8.6 7L2 13" fill="none" stroke="#1a8cd8" stroke-width="1.8"/></svg>
<svg class="r" style="left:1425.5px;top:1078.5px" width="14" height="14" viewBox="0 0 14 14" preserveAspectRatio="none"><path d="M12.4 0.6V13.4" stroke="#1a8cd8" stroke-width="1.8"/><path d="M1.6 1L8.2 7L1.6 13" fill="none" stroke="#1a8cd8" stroke-width="1.8"/></svg>
<svg class="r" style="left:1451px;top:1078.5px" width="16" height="15" viewBox="0 0 16 15" preserveAspectRatio="none"><path d="M0.7 4V0.7H4M11.6 0.7H14.9V4M14.9 10.6V13.9H11.6M4 13.9H0.7V10.6" fill="none" stroke="#6eb3e0" stroke-width="1.2"/><rect x="4.6" y="4" width="6.4" height="7" fill="#cfe6f6" stroke="#6eb3e0" stroke-width="1"/></svg>
<div class="r" style="left:1486.5px;top:1080px;width:2px;height:2px;background:#b9b3ad;"></div>
<div class="r" style="left:1486.5px;top:1084px;width:2px;height:2px;background:#b9b3ad;"></div>
<div class="r" style="left:1486.5px;top:1088px;width:2px;height:2px;background:#b9b3ad;"></div>
<div class="r" style="left:1486.5px;top:1092px;width:2px;height:2px;background:#b9b3ad;"></div>
<svg class="r" style="left:1502px;top:1078.5px" width="14" height="15" viewBox="0 0 14 15" preserveAspectRatio="none"><path d="M7 10V1.6M3.6 4.6L7 1.2L10.4 4.6" fill="none" stroke="#1a8cd8" stroke-width="1.7"/><path d="M0.8 9.4V13.8H13.2V9.4" fill="none" stroke="#1a8cd8" stroke-width="1.5"/></svg>
<div class="t" style="left:1529px;top:1078px;height:16px;line-height:16px;font-size:12.3px;color:#2e3436;letter-spacing:-0.194px;">Export data</div>
<svg class="r" style="left:1603.5px;top:1084px" width="10" height="5" viewBox="0 0 10 5" preserveAspectRatio="none"><path d="M0 0H10 L5 5Z" fill="#2e3436"/></svg>
<div class="r" style="left:1629px;top:1080px;width:2px;height:2px;background:#b9b3ad;"></div>
<div class="r" style="left:1629px;top:1084px;width:2px;height:2px;background:#b9b3ad;"></div>
<div class="r" style="left:1629px;top:1088px;width:2px;height:2px;background:#b9b3ad;"></div>
<div class="r" style="left:1629px;top:1092px;width:2px;height:2px;background:#b9b3ad;"></div>
<div class="r" style="left:1635px;top:1072px;width:1px;height:28px;background:#d6d2ce;"></div>
<svg class="r" style="left:1647.5px;top:1078px" width="16" height="16" viewBox="0 0 16 16" preserveAspectRatio="none"><path d="M6.6 0.6H9.4L9.9 2.6L11.4 3.3L13.2 2.2L15 4.2L13.9 5.9L14.5 7.4L16 8 15.4 10.6 13.6 10.6 12.6 12 13.2 13.8 10.8 15 9.6 13.6H7L5.6 15.2 3.2 14 3.6 12.2 2.6 10.8 0.6 10.6 0.2 8 2 7.2 2.4 5.6 1.4 4 3.2 2.2 4.8 3.2 6.2 2.6Z" fill="#1a8cd8"/><circle cx="8" cy="8" r="2.4" fill="#e3e0de"/></svg>
<div class="r" style="left:901.2px;top:1107px;width:68.3px;height:29.5px;background:#ffffff;border:1px solid #d4d0cc;border-radius:5.5px;"></div>
<div class="t" style="left:910px;top:1114px;height:16px;line-height:16px;font-size:12.3px;color:#10141c;letter-spacing:-0.016px;">200</div>
<svg class="r" style="left:982.5px;top:1114px" width="15" height="15" viewBox="0 0 15 15" preserveAspectRatio="none"><path d="M2.4 0.8L7.5 5.8L12.6 0.8M7.5 5.8V10" fill="none" stroke="#1a8cd8" stroke-width="1.5"/><path d="M5.4 8L7.5 10.2L9.6 8" fill="#1a8cd8"/><path d="M0.8 11V14.2H14.2V11" fill="none" stroke="#1a8cd8" stroke-width="1.4"/></svg>
<div class="r" style="left:1008px;top:1113px;width:19px;height:17.5px;background:#eceae8;"></div>
<div class="t" style="left:1011px;top:1114px;height:16px;line-height:16px;font-size:12.3px;color:#10141c;letter-spacing:-0.188px;">54</div>
<div class="r" style="left:1032px;top:1115px;width:2px;height:2px;background:#b9b3ad;"></div>
<div class="r" style="left:1032px;top:1119px;width:2px;height:2px;background:#b9b3ad;"></div>
<div class="r" style="left:1032px;top:1123px;width:2px;height:2px;background:#b9b3ad;"></div>
<div class="r" style="left:1032px;top:1127px;width:2px;height:2px;background:#b9b3ad;"></div>
<div class="t" style="left:1065px;top:1115px;height:12px;line-height:12px;font-size:9px;color:#5a5d5e;letter-spacing:-1.000px;">···</div>
<div class="t" style="left:1088px;top:1114px;height:16px;line-height:16px;font-size:12px;color:#2a2e30;letter-spacing:0.049px;">54 row(s) fetched - 5ms (3ms fetch), on 2023-10-06 at 11:20:53</div>
<svg class="r" style="left:1720px;top:1121px" width="16" height="15" viewBox="0 0 16 15" preserveAspectRatio="none"><rect x="0.6" y="1" width="4.4" height="13" rx="1" fill="#1a8cd8"/><path d="M7 13.6H14.6" stroke="#1a8cd8" stroke-width="2"/><path d="M8 4.4Q13.6 4 14 10" fill="none" stroke="#1a8cd8" stroke-width="1.5"/><path d="M9.4 1.6L6.6 4.6L10 6.8Z" fill="#1a8cd8"/></svg>
<div class="r" style="left:0px;top:1139px;width:1741px;height:31px;background:#f6f5f4;"></div>
<div class="r" style="left:1362px;top:1140px;width:1px;height:28px;background:#e0dcd8;"></div>
<div class="r" style="left:1406px;top:1140px;width:1px;height:28px;background:#e0dcd8;"></div>
<div class="t" style="left:1368.4px;top:1142.5px;height:20px;line-height:20px;font-size:13px;color:#2e3436;letter-spacing:0.613px;">GMT</div>
<div class="t" style="left:1412.4px;top:1142.5px;height:20px;line-height:20px;font-size:13px;color:#2e3436;letter-spacing:-0.221px;">en_GB</div>
<div class="r" style="left:1457.5px;top:1145px;width:2px;height:2px;background:#c9c3bc;"></div>
<div class="r" style="left:1457.5px;top:1149px;width:2px;height:2px;background:#c9c3bc;"></div>
<div class="r" style="left:1457.5px;top:1153px;width:2px;height:2px;background:#c9c3bc;"></div>
<div class="r" style="left:1457.5px;top:1157px;width:2px;height:2px;background:#c9c3bc;"></div>
</div></body></html>
